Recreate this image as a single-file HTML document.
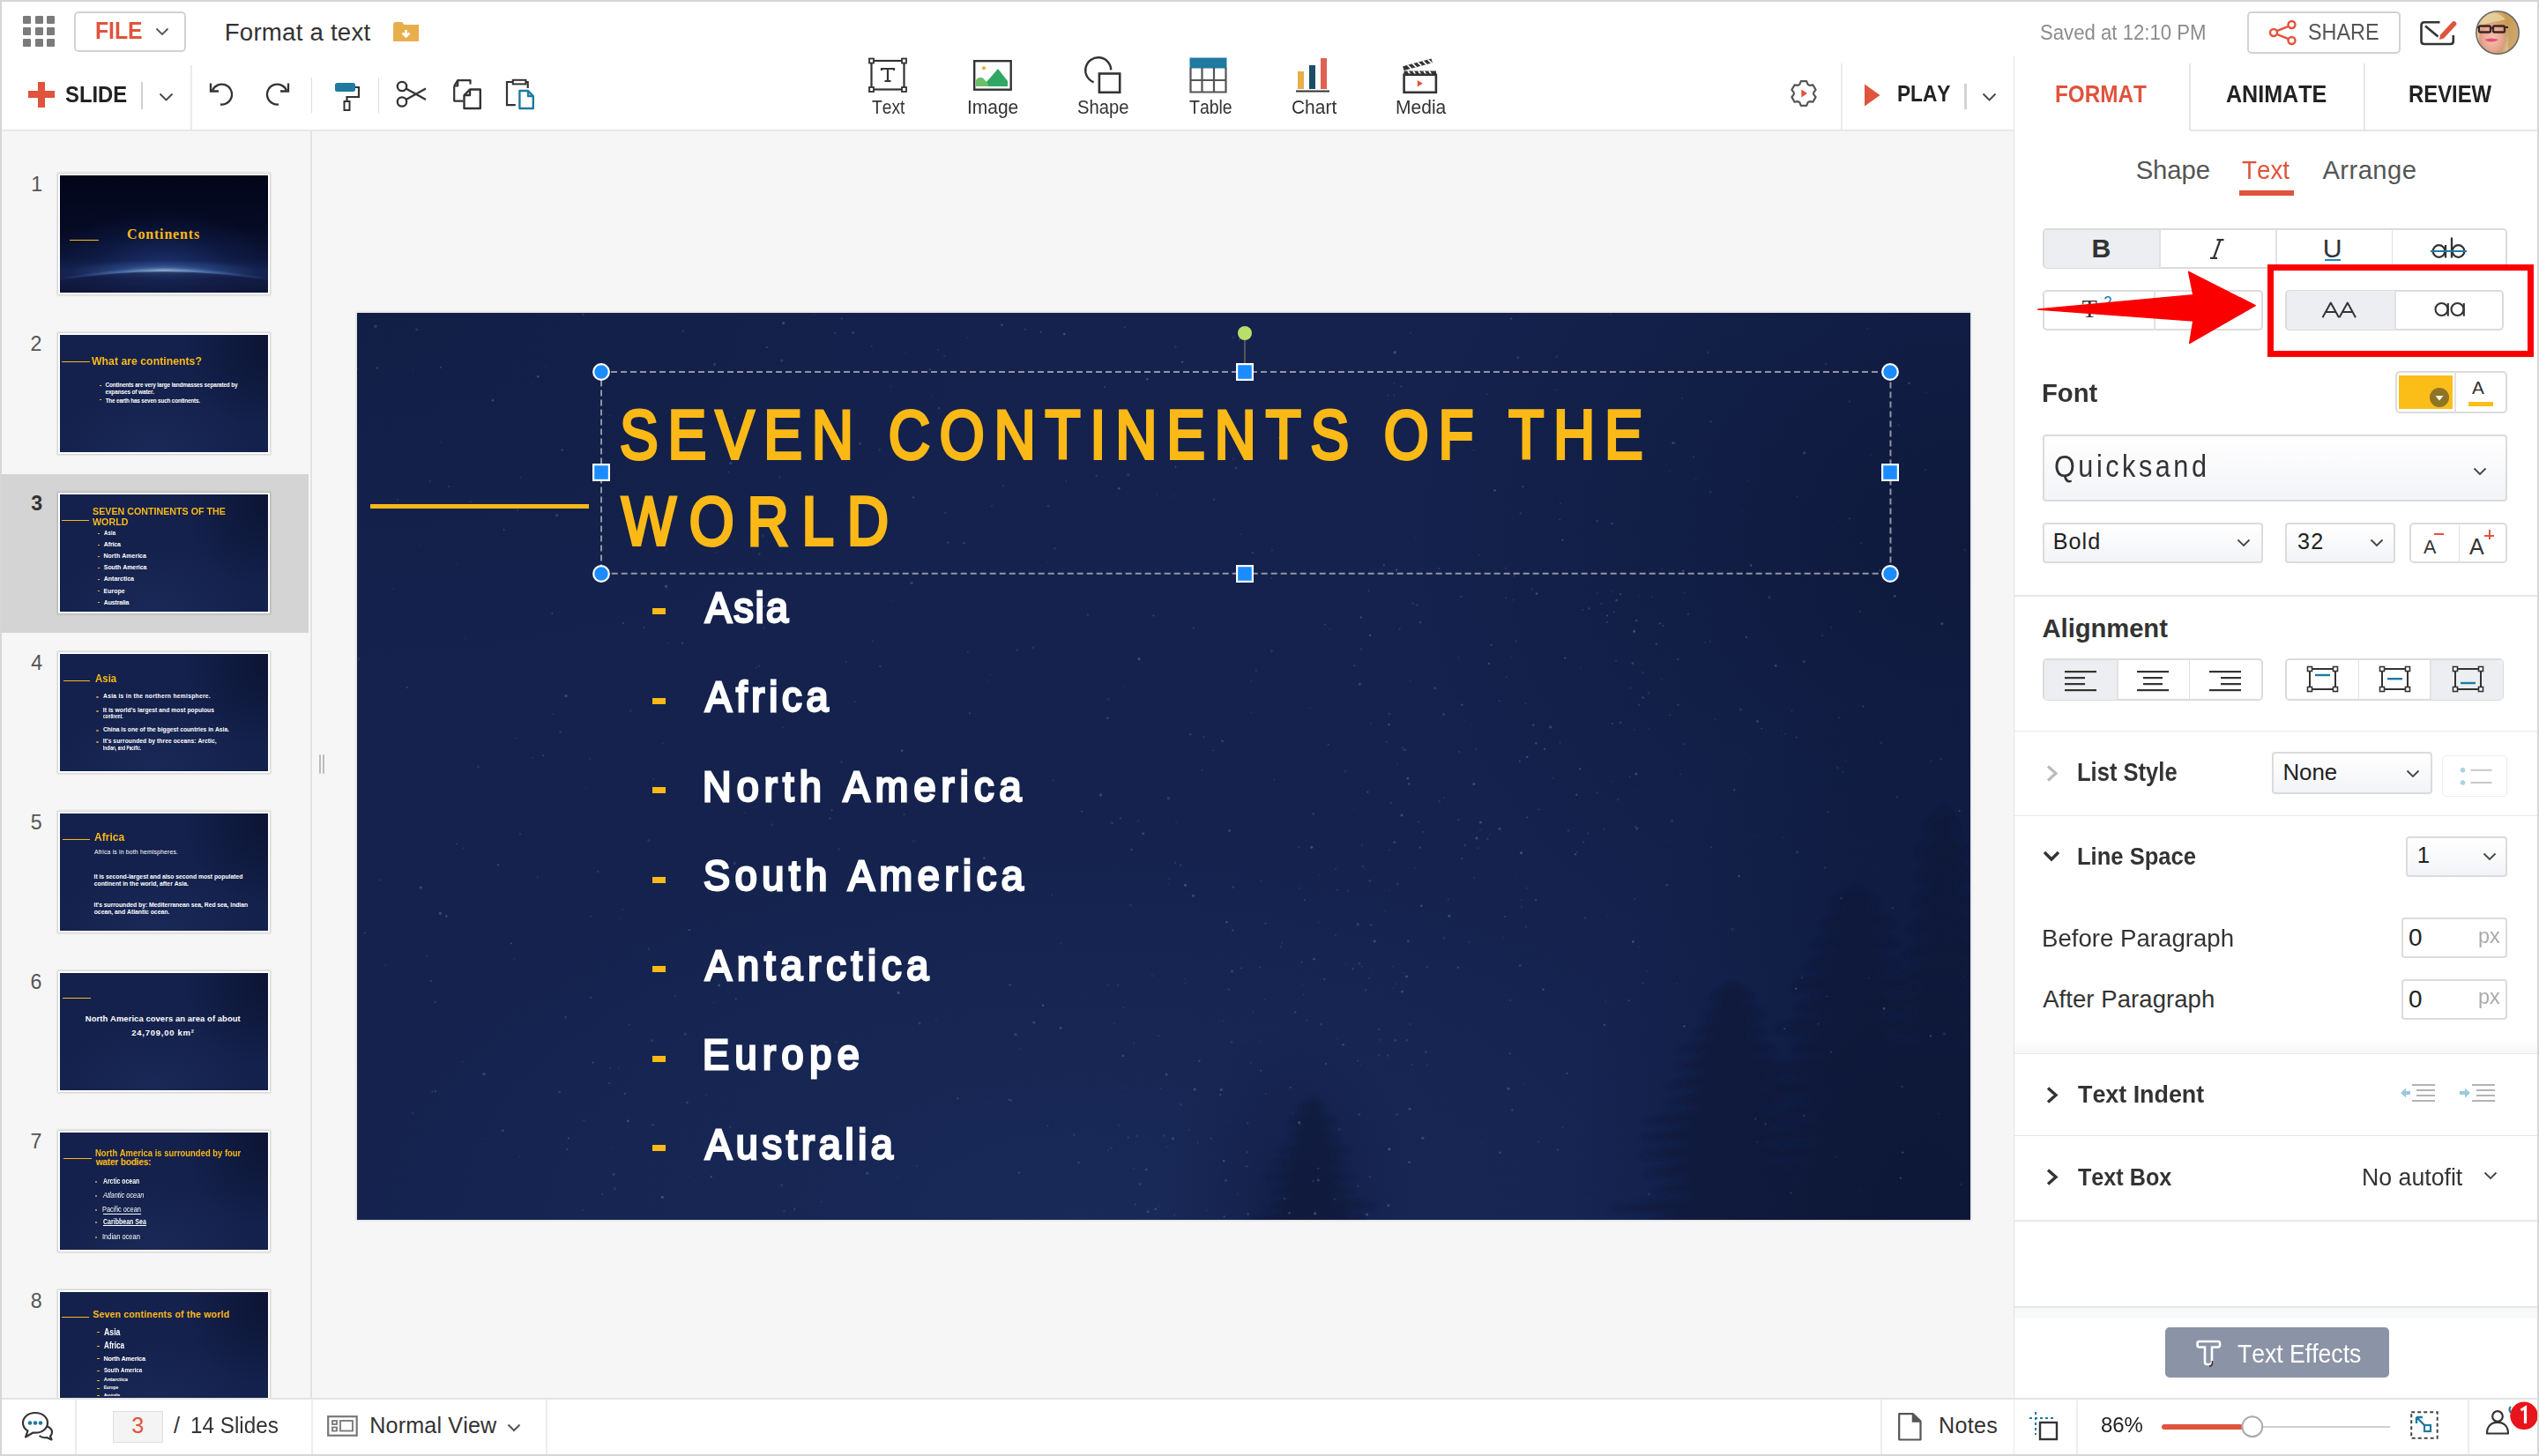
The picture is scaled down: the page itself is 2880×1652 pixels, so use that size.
<!DOCTYPE html>
<html><head><meta charset="utf-8">
<style>
*{margin:0;padding:0;box-sizing:border-box}
html,body{width:2880px;height:1652px;overflow:hidden;background:#fff}
body{position:relative;font-family:"Liberation Sans",sans-serif;color:#333;font-kerning:none}
.a{position:absolute}
.t{position:absolute;white-space:nowrap;line-height:1}
svg{position:absolute;overflow:visible}
</style></head><body>
<div class="a" style="left:0px;top:149px;width:2880px;height:1438px;background:#f6f6f6"></div>
<div class="a" style="left:0px;top:147px;width:2284px;height:2px;background:#e8e8e8"></div>
<div class="a" style="left:352px;top:149px;width:1.5px;height:1438px;background:#e2e2e2"></div>
<div class="a" style="left:2284px;top:64px;width:594px;height:1523px;background:#fff;border-left:1.5px solid #e2e2e2"></div>
<div class="a" style="left:26px;top:18px;width:9px;height:9px;background:#7b7b7b;border-radius:1px"></div>
<div class="a" style="left:39.5px;top:18px;width:9px;height:9px;background:#7b7b7b;border-radius:1px"></div>
<div class="a" style="left:53px;top:18px;width:9px;height:9px;background:#7b7b7b;border-radius:1px"></div>
<div class="a" style="left:26px;top:31px;width:9px;height:9px;background:#7b7b7b;border-radius:1px"></div>
<div class="a" style="left:39.5px;top:31px;width:9px;height:9px;background:#7b7b7b;border-radius:1px"></div>
<div class="a" style="left:53px;top:31px;width:9px;height:9px;background:#7b7b7b;border-radius:1px"></div>
<div class="a" style="left:26px;top:43.5px;width:9px;height:9px;background:#7b7b7b;border-radius:1px"></div>
<div class="a" style="left:39.5px;top:43.5px;width:9px;height:9px;background:#7b7b7b;border-radius:1px"></div>
<div class="a" style="left:53px;top:43.5px;width:9px;height:9px;background:#7b7b7b;border-radius:1px"></div>
<div class="a" style="left:84px;top:13px;width:127px;height:46px;border:2px solid #d2d2d2;border-radius:5px;background:#fff"></div>
<div class="t" style="left:107.54px;top:21.73px;font-size:26.89px;color:#e0533c;font-weight:700;transform:scaleX(0.9205);transform-origin:0 0;">FILE</div>
<svg style="left:176px;top:30px;" width="16" height="12" viewBox="0 0 16 12"><path d="M1.5 2.5 L8 9 L14.5 2.5" fill="none" stroke="#555" stroke-width="1.8"/></svg>
<div class="t" style="left:254.73px;top:22.62px;font-size:27.62px;color:#333;letter-spacing:0.233px;">Format a text</div>
<svg style="left:446px;top:25px;" width="29" height="22" viewBox="0 0 29 22"><path d="M0 3 Q0 0 3 0 L10 0 L12.5 3 L29 3 L29 7 L0 7 Z" fill="#e8ae4c"/><rect x="0" y="6" width="29" height="16" fill="#e8ae4c"/><path d="M14.5 9 V16 M10.5 12.5 L14.5 16.5 L18.5 12.5" stroke="#fff" stroke-width="2.6" fill="none"/></svg>
<div class="t" style="left:2313.59px;top:26.06px;font-size:23.55px;color:#8c8c8c;transform:scaleX(0.9413);transform-origin:0 0;">Saved at 12:10 PM</div>
<div class="a" style="left:2549px;top:13px;width:174px;height:48px;border:2px solid #d2d2d2;border-radius:5px;background:#fff"></div>
<svg style="left:2574px;top:23px;" width="32" height="28" viewBox="0 0 32 28"><circle cx="5" cy="14" r="4" fill="none" stroke="#e0533c" stroke-width="2.4"/><circle cx="25.5" cy="5" r="4" fill="none" stroke="#e0533c" stroke-width="2.4"/><circle cx="25.5" cy="23" r="4" fill="none" stroke="#e0533c" stroke-width="2.4"/><path d="M8.6 12.2 L21.8 6.8 M8.6 15.8 L21.8 21.2" stroke="#e0533c" stroke-width="2.4"/></svg>
<div class="t" style="left:2618.34px;top:24.29px;font-size:25.87px;color:#555;transform:scaleX(0.9050);transform-origin:0 0;">SHARE</div>
<svg style="left:2745px;top:22px;" width="44" height="30" viewBox="0 0 44 30"><path d="M22.5 3.2 H5 Q1.5 3.2 1.5 6.7 V24.7 Q1.5 28 5 28 H34.5 Q37.8 28 37.8 24.7 V18" fill="none" stroke="#333" stroke-width="2.6" stroke-linejoin="round"/><path d="M6 7.5 L20.5 19.5" stroke="#333" stroke-width="2.6"/><path d="M23 17.5 L36.5 3 Q38.5 1 40.5 3 Q42.5 5 40.5 7 L27 21.5 L22 23 Z" fill="#e0533c"/></svg>
<svg style="left:2808px;top:12px;" width="50" height="50" viewBox="0 0 50 50"><defs><clipPath id="avc"><circle cx="25" cy="25" r="24.2"/></clipPath><linearGradient id="hair" x1="0" y1="0" x2="1" y2="0.3"><stop offset="0" stop-color="#e8d7b0"/><stop offset=".45" stop-color="#d9b070"/><stop offset=".75" stop-color="#c79a55"/><stop offset="1" stop-color="#e2d8c0"/></linearGradient><radialGradient id="face" cx=".5" cy=".5" r=".5"><stop offset="0" stop-color="#f4c2b0"/><stop offset=".7" stop-color="#e9a892"/><stop offset="1" stop-color="#d89a80"/></radialGradient></defs>
<g clip-path="url(#avc)"><rect width="50" height="50" fill="url(#hair)"/>
<ellipse cx="19" cy="31" rx="15" ry="19" fill="url(#face)"/>
<path d="M30 0 Q40 20 36 50 L50 50 L50 0 Z" fill="#c99b58" opacity=".8"/>
<path d="M4 4 Q20 -4 34 10 Q24 12 8 16 Z" fill="#e6cf9a" opacity=".9"/>
<rect x="4" y="17.5" width="13" height="7" rx="1.5" fill="none" stroke="#3a2626" stroke-width="2.3"/>
<rect x="20" y="17.5" width="13" height="7" rx="1.5" fill="none" stroke="#3a2626" stroke-width="2.3"/>
<path d="M17 20 H20 M1 19 H4 M33 19 H37" stroke="#3a2626" stroke-width="2"/>
<path d="M10 33 Q18 30 26 33 Q18 38 10 33 Z" fill="#e2507a"/>
</g><circle cx="25" cy="25" r="24.2" fill="none" stroke="#666" stroke-width="1.5"/></svg>
<div class="a" style="left:32px;top:103px;width:30px;height:7.5px;background:#e0533c"></div>
<div class="a" style="left:43.2px;top:92.5px;width:7.5px;height:29px;background:#e0533c"></div>
<div class="t" style="left:73.71px;top:93.67px;font-size:26.02px;color:#222;font-weight:700;transform:scaleX(0.9165);transform-origin:0 0;">SLIDE</div>
<div class="a" style="left:160px;top:93px;width:1.5px;height:31px;background:#d0d0d0"></div>
<svg style="left:180px;top:104px;" width="17" height="12" viewBox="0 0 17 12"><path d="M1.5 2.5 L8.5 9.5 L15.5 2.5" fill="none" stroke="#444" stroke-width="1.8"/></svg>
<div class="a" style="left:216px;top:74px;width:1.5px;height:74px;background:#ebebeb"></div>
<svg style="left:237px;top:93px;" width="29" height="28" viewBox="0 0 29 28"><path d="M4 9.5 A11.5 11.5 0 1 1 13 25.5" fill="none" stroke="#333" stroke-width="2.3"/><path d="M2 1.5 V10.5 H11" fill="none" stroke="#333" stroke-width="2.3"/></svg>
<svg style="left:300px;top:93px;" width="29" height="28" viewBox="0 0 29 28"><path d="M25 9.5 A11.5 11.5 0 1 0 16 25.5" fill="none" stroke="#333" stroke-width="2.3"/><path d="M27 1.5 V10.5 H18" fill="none" stroke="#333" stroke-width="2.3"/></svg>
<div class="a" style="left:352.5px;top:88px;width:1.5px;height:40px;background:#dcdcdc"></div>
<svg style="left:379px;top:93px;" width="30" height="33" viewBox="0 0 30 33"><rect x="1" y="1" width="23" height="10" rx="2.5" fill="#1f7aa0"/><path d="M24 6 H28 V17 H14.5 V22" fill="none" stroke="#333" stroke-width="2.2"/><rect x="11.5" y="22" width="6" height="10" fill="none" stroke="#333" stroke-width="2"/></svg>
<div class="a" style="left:428.5px;top:88px;width:1.5px;height:40px;background:#dcdcdc"></div>
<svg style="left:449px;top:91px;" width="36" height="32" viewBox="0 0 36 32"><circle cx="7" cy="7" r="5.2" fill="none" stroke="#333" stroke-width="2.3"/><circle cx="7" cy="24.5" r="5.2" fill="none" stroke="#333" stroke-width="2.3"/><path d="M11.5 9.5 L34 22 M11.5 22 L34 9.5" stroke="#333" stroke-width="2.3"/></svg>
<svg style="left:514px;top:90px;" width="34" height="35" viewBox="0 0 34 35"><path d="M1.2 7.5 L5.2 1.2 H19.5 V5.5 M1.2 7.5 V24.6 H11.5 M1.2 7.5 H5.2 V1.2" fill="none" stroke="#333" stroke-width="2.2" stroke-linejoin="round"/><path d="M12.5 18 L19 11.5 H30.8 V33 H12.5 Z M12.5 18 H19 V11.5" fill="none" stroke="#333" stroke-width="2.4" stroke-linejoin="round"/></svg>
<svg style="left:573px;top:89px;" width="34" height="36" viewBox="0 0 34 36"><path d="M8.5 4 H2 V30.2 H11.8 M23.5 4 H25.7 V11" fill="none" stroke="#333" stroke-width="2.2"/><rect x="8.8" y="1.8" width="14.6" height="4.6" fill="none" stroke="#333" stroke-width="2"/><path d="M16.4 14 H26 L31.8 20 V34 H16.4 Z M26 14 V20 H31.8" fill="none" stroke="#1f7aa0" stroke-width="2.4" stroke-linejoin="round"/></svg>
<svg style="left:985px;top:65px;" width="44" height="40" viewBox="0 0 44 40"><rect x="3.5" y="4" width="37" height="32.5" fill="none" stroke="#333" stroke-width="2.2"/><rect x="1" y="1.5" width="5" height="5" fill="#fff" stroke="#333" stroke-width="1.8"/><rect x="38" y="1.5" width="5" height="5" fill="#fff" stroke="#333" stroke-width="1.8"/><rect x="1" y="34" width="5" height="5" fill="#fff" stroke="#333" stroke-width="1.8"/><rect x="38" y="34" width="5" height="5" fill="#fff" stroke="#333" stroke-width="1.8"/><path d="M15 15 V13 H29 V15 M22 13 V27 M18.5 27 H25.5" fill="none" stroke="#333" stroke-width="2.2"/></svg>
<div class="t" style="left:988.97px;top:112.29px;font-size:21.51px;color:#333;transform:scaleX(0.8957);transform-origin:0 0;">Text</div>
<svg style="left:1104px;top:68px;" width="44" height="35" viewBox="0 0 44 35"><rect x="1.2" y="1.2" width="41.5" height="32.5" fill="none" stroke="#333" stroke-width="2.4"/><circle cx="12" cy="9.2" r="2" fill="#f0a630"/><path d="M3 30 L3 23 Q7 18 11 21 L15 25 L28 10 L39 24 L39 30 Z" fill="#2fa864"/><path d="M3 30 L3 23 Q7 18 11 21 L17 28 L17 30 Z" fill="#6cc06a"/></svg>
<div class="t" style="left:1096.67px;top:112.29px;font-size:21.51px;color:#333;transform:scaleX(0.9746);transform-origin:0 0;">Image</div>
<svg style="left:1229px;top:63px;" width="44" height="44" viewBox="0 0 44 44"><path d="M11.6 30.3 A14.5 14.5 0 1 1 31.2 16.4" fill="none" stroke="#333" stroke-width="2.4"/><rect x="17.9" y="20.5" width="23.3" height="21.3" fill="none" stroke="#333" stroke-width="2.6"/></svg>
<div class="t" style="left:1222.48px;top:112.29px;font-size:21.51px;color:#333;transform:scaleX(0.9391);transform-origin:0 0;">Shape</div>
<svg style="left:1349px;top:65px;" width="43" height="41" viewBox="0 0 43 41"><rect x="0.5" y="0.5" width="42" height="12" fill="#1f7aa0"/><path d="M1.5 12 V39.5 H41.5 V12 M1.5 26 H41.5 M14.5 12 V39.5 M28 12 V39.5" fill="none" stroke="#555" stroke-width="2.2"/></svg>
<div class="t" style="left:1348.56px;top:112.29px;font-size:21.51px;color:#333;transform:scaleX(0.9051);transform-origin:0 0;">Table</div>
<svg style="left:1470px;top:65px;" width="39" height="41" viewBox="0 0 39 41"><rect x="2" y="16" width="7" height="20" fill="#e8ae4c"/><rect x="15" y="9" width="7" height="27" fill="#1b4e66"/><rect x="28" y="1" width="7" height="35" fill="#e06054"/><path d="M0 38.5 H38" stroke="#333" stroke-width="2"/></svg>
<div class="t" style="left:1464.94px;top:112.29px;font-size:21.51px;color:#333;transform:scaleX(0.9737);transform-origin:0 0;">Chart</div>
<svg style="left:1591px;top:64px;" width="40" height="44" viewBox="0 0 40 44"><g transform="rotate(-15 1.5 16)"><rect x="1.5" y="11" width="33.5" height="5" fill="#333"/><path d="M7 11 l3 5 M13 11 l3 5 M19 11 l3 5 M25 11 l3 5 M31 11 l3 5" stroke="#fff" stroke-width="1.7"/></g><rect x="1.5" y="16.5" width="36.5" height="4.5" fill="#333"/><path d="M6 16.5 l3 4.5 M12 16.5 l3 4.5 M18 16.5 l3 4.5 M24 16.5 l3 4.5 M30 16.5 l3 4.5" stroke="#fff" stroke-width="1.7"/><rect x="1.6" y="20.8" width="36.3" height="20" fill="none" stroke="#333" stroke-width="2.6"/><path d="M16.8 27 V34.4 L22.8 30.7 Z" fill="#e0533c"/></svg>
<div class="t" style="left:1583.47px;top:112.29px;font-size:21.51px;color:#333;transform:scaleX(0.9784);transform-origin:0 0;">Media</div>
<svg style="left:2030px;top:90px;" width="32" height="32" viewBox="0 0 32 32"><path d="M11.40 5.68 L12.81 2.16 L19.19 2.16 L20.60 5.68 L22.64 6.86 L26.39 6.32 L29.58 11.85 L27.24 14.82 L27.24 17.18 L29.58 20.15 L26.39 25.68 L22.64 25.14 L20.60 26.32 L19.19 29.84 L12.81 29.84 L11.40 26.32 L9.36 25.14 L5.61 25.68 L2.42 20.15 L4.76 17.18 L4.76 14.82 L2.42 11.85 L5.61 6.32 L9.36 6.86 Z" fill="none" stroke="#555" stroke-width="2.2" stroke-linejoin="round"/><path d="M13.3 11.5 V20.5 L20 16 Z" fill="#e0533c"/></svg>
<div class="a" style="left:2088px;top:72px;width:1.5px;height:76px;background:#ebebeb"></div>
<svg style="left:2114px;top:95px;" width="20" height="26" viewBox="0 0 20 26"><path d="M1 0.5 V25.5 L18.5 13 Z" fill="#e0533c"/></svg>
<div class="t" style="left:2151.78px;top:93.72px;font-size:25.73px;color:#222;font-weight:700;transform:scaleX(0.8815);transform-origin:0 0;">PLAY</div>
<div class="a" style="left:2228.3px;top:94.7px;width:3.2px;height:29px;background:#d3d3d3"></div>
<svg style="left:2248px;top:104px;" width="17" height="12" viewBox="0 0 17 12"><path d="M1.5 2.5 L8.5 9.5 L15.5 2.5" fill="none" stroke="#444" stroke-width="1.8"/></svg>
<div class="a" style="left:2483px;top:72px;width:1.5px;height:76px;background:#e6e6e6"></div>
<div class="a" style="left:2681px;top:72px;width:1.5px;height:76px;background:#e6e6e6"></div>
<div class="a" style="left:2484px;top:147px;width:394px;height:2px;background:#e6e6e6"></div>
<div class="t" style="left:2331.38px;top:93.53px;font-size:26.89px;color:#e0533c;font-weight:700;transform:scaleX(0.9033);transform-origin:0 0;">FORMAT</div>
<div class="t" style="left:2524.68px;top:93.53px;font-size:26.89px;color:#222;font-weight:700;transform:scaleX(0.9332);transform-origin:0 0;">ANIMATE</div>
<div class="t" style="left:2731.90px;top:93.53px;font-size:26.89px;color:#222;font-weight:700;transform:scaleX(0.8873);transform-origin:0 0;">REVIEW</div>
<div class="t" style="left:2422.67px;top:179.06px;font-size:29.22px;color:#555;letter-spacing:-0.038px;">Shape</div>
<div class="t" style="left:2542.88px;top:179.06px;font-size:29.22px;color:#e0533c;transform:scaleX(0.9509);transform-origin:0 0;">Text</div>
<div class="t" style="left:2634.44px;top:179.06px;font-size:29.22px;color:#555;letter-spacing:0.420px;">Arrange</div>
<div class="a" style="left:2540px;top:216px;width:62px;height:5.5px;background:#e0533c"></div>
<div class="a" style="left:2317px;top:259px;width:527px;height:46px;border:2px solid #dbdbdb;border-radius:5px;background:#fff;overflow:hidden"></div>
<div class="a" style="left:2318.5px;top:260.5px;width:131px;height:43px;background:#eceef1;border-radius:4px 0 0 4px"></div>
<div class="a" style="left:2449px;top:260px;width:1.5px;height:44px;background:#e2e2e2"></div>
<div class="a" style="left:2581px;top:260px;width:1.5px;height:44px;background:#e2e2e2"></div>
<div class="a" style="left:2712.5px;top:260px;width:1.5px;height:44px;background:#e2e2e2"></div>
<div class="t" style="left:2372.58px;top:266.90px;font-size:30.23px;color:#333;font-weight:700;">B</div>
<svg style="left:2505px;top:271px;" width="18" height="23" viewBox="0 0 18 23"><path d="M9.5 1.2 H17.5 M2 21.8 H10 M13.5 1.2 L6 21.8" fill="none" stroke="#333" stroke-width="2.3"/></svg>
<div class="t" style="left:2634.67px;top:266.90px;font-size:30.23px;color:#333;">U</div>
<div class="a" style="left:2637px;top:293.5px;width:18px;height:2.5px;background:#1a8ac0"></div>
<svg style="left:2757px;top:268px;" width="42" height="26" viewBox="0 0 42 26"><circle cx="9.5" cy="17" r="6.8" fill="none" stroke="#333" stroke-width="2.3"/><path d="M17 10 V24.5" stroke="#333" stroke-width="2.3"/><path d="M24 1.5 V24.5" stroke="#333" stroke-width="2.3"/><circle cx="31.5" cy="17" r="6.8" fill="none" stroke="#333" stroke-width="2.3"/></svg>
<div class="a" style="left:2757px;top:283.5px;width:41px;height:2.5px;background:#1a7aa8"></div>
<div class="a" style="left:2317px;top:328.5px;width:250px;height:46.5px;border:2px solid #dbdbdb;border-radius:5px;background:#fff"></div>
<div class="a" style="left:2443px;top:329.5px;width:1.5px;height:45px;background:#e2e2e2"></div>
<div class="t" style="left:2361.49px;top:336.88px;font-size:28.49px;color:#333;font-family:'Liberation Serif',serif;">T</div>
<div class="t" style="left:2385.92px;top:335.23px;font-size:17.44px;color:#1a7aa8;">2</div>
<div class="t" style="left:2487.49px;top:336.88px;font-size:28.49px;color:#333;font-family:'Liberation Serif',serif;">T</div>
<div class="t" style="left:2511.12px;top:353.23px;font-size:17.44px;color:#1a7aa8;">2</div>
<div class="a" style="left:2592.4px;top:328.5px;width:248px;height:46.5px;border:2px solid #dbdbdb;border-radius:5px;background:#fff;overflow:hidden"></div>
<div class="a" style="left:2594px;top:330px;width:122px;height:43.5px;background:#eceef1;border-radius:4px 0 0 4px"></div>
<div class="a" style="left:2716px;top:329.5px;width:1.5px;height:45px;background:#e2e2e2"></div>
<svg style="left:2633px;top:342px;" width="44" height="20" viewBox="0 0 44 20"><path d="M1.5 18.3 L10.8 1.5 L20 18.3 M5.3 12 H16.3" fill="none" stroke="#333" stroke-width="2" stroke-linejoin="round"/><path d="M20.5 18.3 L29.8 1.5 L39 18.3 M24.3 12 H35.3" fill="none" stroke="#333" stroke-width="2" stroke-linejoin="round"/></svg>
<svg style="left:2760px;top:341px;" width="40" height="20" viewBox="0 0 40 20"><circle cx="9.5" cy="10" r="7" fill="none" stroke="#333" stroke-width="2.1"/><path d="M16.8 3 V17.7" stroke="#333" stroke-width="2.1"/><circle cx="27.5" cy="10" r="7" fill="none" stroke="#333" stroke-width="2.1"/><path d="M34.8 3 V17.7" stroke="#333" stroke-width="2.1"/></svg>
<svg style="left:2300px;top:300px;" width="270" height="100" viewBox="0 0 270 100"><path d="M11.8 50.9 L187.9 34.7 L182.6 8.3 L258.2 46.7 L183.7 89.3 L187.9 63.9 Z" fill="#fb0000" stroke="#fb0000" stroke-width="1.5" stroke-linejoin="round"/></svg>
<div class="a" style="left:2572px;top:300.4px;width:301.6px;height:105px;border:7.6px solid #fb0000"></div>
<div class="t" style="left:2315.84px;top:430.77px;font-size:29.80px;color:#333;font-weight:700;transform:scaleX(0.9812);transform-origin:0 0;">Font</div>
<div class="a" style="left:2716.7px;top:420.8px;width:127px;height:48.4px;border:2px solid #dbdbdb;border-radius:5px;background:#fff"></div>
<div class="a" style="left:2720.5px;top:426px;width:61.5px;height:37.8px;background:#fbbd18"></div>
<div class="a" style="left:2784px;top:422px;width:1.5px;height:46px;background:#e2e2e2"></div>
<svg style="left:2755.8px;top:439.8px;" width="22" height="22" viewBox="0 0 22 22"><circle cx="11" cy="11" r="11" fill="#8e7425"/><path d="M6.5 9 H15.5 L11 14.5 Z" fill="#fff"/></svg>
<div class="t" style="left:2803.96px;top:429.70px;font-size:20.78px;color:#333;">A</div>
<div class="a" style="left:2800px;top:455.5px;width:28px;height:5px;background:#fbbd18"></div>
<div class="a" style="left:2317px;top:492.9px;width:526.6px;height:76.1px;border:2px solid #dbdbdb;border-radius:4px;background:linear-gradient(#fff,#f3f4f7);"></div>
<div class="t" style="left:2330.05px;top:512.35px;font-size:35.61px;color:#333;letter-spacing:4.104px;transform:scaleX(0.8600);transform-origin:0 0;">Quicksand</div>
<svg style="left:2805px;top:529px;" width="18" height="14" viewBox="0 0 18 14"><path d="M1.5 2.5 L8 9 L14.5 2.5" fill="none" stroke="#444" stroke-width="1.8"/></svg>
<div class="a" style="left:2317px;top:592.6px;width:250px;height:46.4px;border:2px solid #dbdbdb;border-radius:4px;background:linear-gradient(#fff,#f3f4f7);"></div>
<div class="t" style="left:2328.74px;top:602.01px;font-size:25.15px;color:#222;letter-spacing:1.019px;">Bold</div>
<svg style="left:2537px;top:609.5px;" width="18" height="14" viewBox="0 0 18 14"><path d="M1.5 2.5 L8 9 L14.5 2.5" fill="none" stroke="#444" stroke-width="1.8"/></svg>
<div class="a" style="left:2592.4px;top:592.6px;width:124.6px;height:46.4px;border:2px solid #dbdbdb;border-radius:4px;background:linear-gradient(#fff,#f3f4f7);"></div>
<div class="t" style="left:2606.04px;top:602.01px;font-size:25.15px;color:#222;letter-spacing:1.253px;">32</div>
<svg style="left:2687.5px;top:609.5px;" width="18" height="14" viewBox="0 0 18 14"><path d="M1.5 2.5 L8 9 L14.5 2.5" fill="none" stroke="#444" stroke-width="1.8"/></svg>
<div class="a" style="left:2732.5px;top:592.6px;width:111.1px;height:46.4px;border:2px solid #dbdbdb;border-radius:5px;background:#fff"></div>
<div class="a" style="left:2788.5px;top:594px;width:1.5px;height:44px;background:#e2e2e2"></div>
<div class="t" style="left:2748.96px;top:610.59px;font-size:21.51px;color:#333;">A</div>
<div class="a" style="left:2761px;top:604.5px;width:10.7px;height:2.5px;background:#e0533c"></div>
<div class="t" style="left:2800.95px;top:607.63px;font-size:25.00px;color:#333;">A</div>
<div class="a" style="left:2818.2px;top:606.8px;width:11px;height:2.5px;background:#e0533c"></div>
<div class="a" style="left:2822.5px;top:601.3px;width:2.5px;height:11px;background:#e0533c"></div>
<div class="a" style="left:2285px;top:675px;width:593px;height:1.5px;background:#e8e8e8"></div>
<div class="t" style="left:2316.57px;top:698.96px;font-size:29.22px;color:#333;font-weight:700;letter-spacing:-0.067px;">Alignment</div>
<div class="a" style="left:2317px;top:747px;width:250px;height:48px;border:2px solid #dbdbdb;border-radius:5px;background:#fff;overflow:hidden"></div>
<div class="a" style="left:2318.5px;top:748.5px;width:83px;height:45px;background:#eceef1"></div>
<div class="a" style="left:2401px;top:748px;width:1.5px;height:46px;background:#e2e2e2"></div>
<div class="a" style="left:2482.8px;top:748px;width:1.5px;height:46px;background:#e2e2e2"></div>
<svg style="left:2342px;top:760.5px;" width="40" height="24" viewBox="0 0 40 24"><rect x="0" y="0" width="36" height="2.2" fill="#333"/><rect x="0" y="7" width="23" height="2.2" fill="#333"/><rect x="0" y="14" width="23" height="2.2" fill="#333"/><rect x="0" y="21" width="36" height="2.2" fill="#333"/></svg>
<svg style="left:2424px;top:760.5px;" width="40" height="24" viewBox="0 0 40 24"><rect x="0" y="0" width="36" height="2.2" fill="#333"/><rect x="7" y="7" width="22" height="2.2" fill="#333"/><rect x="7" y="14" width="22" height="2.2" fill="#333"/><rect x="0" y="21" width="36" height="2.2" fill="#333"/></svg>
<svg style="left:2505.8px;top:760.5px;" width="40" height="24" viewBox="0 0 40 24"><rect x="0" y="0" width="36" height="2.2" fill="#333"/><rect x="13" y="7" width="23" height="2.2" fill="#333"/><rect x="13" y="14" width="23" height="2.2" fill="#333"/><rect x="0" y="21" width="36" height="2.2" fill="#333"/></svg>
<div class="a" style="left:2592.4px;top:747px;width:248px;height:48px;border:2px solid #dbdbdb;border-radius:5px;background:#fff;overflow:hidden"></div>
<div class="a" style="left:2757px;top:748.5px;width:82px;height:45px;background:#eceef1"></div>
<div class="a" style="left:2674.6px;top:748px;width:1.5px;height:46px;background:#e2e2e2"></div>
<div class="a" style="left:2756px;top:748px;width:1.5px;height:46px;background:#e2e2e2"></div>
<svg style="left:2616.8px;top:756px;" width="36" height="30" viewBox="0 0 36 30"><rect x="3" y="3" width="29" height="23" fill="none" stroke="#333" stroke-width="2"/><rect x="0.5" y="0.5" width="5" height="5" fill="#fff" stroke="#333" stroke-width="1.6"/><rect x="29.5" y="0.5" width="5" height="5" fill="#fff" stroke="#333" stroke-width="1.6"/><rect x="0.5" y="23.5" width="5" height="5" fill="#fff" stroke="#333" stroke-width="1.6"/><rect x="29.5" y="23.5" width="5" height="5" fill="#fff" stroke="#333" stroke-width="1.6"/><rect x="9" y="8.8" width="17" height="2.4" fill="#1a7aa8"/></svg>
<svg style="left:2699px;top:756px;" width="36" height="30" viewBox="0 0 36 30"><rect x="3" y="3" width="29" height="23" fill="none" stroke="#333" stroke-width="2"/><rect x="0.5" y="0.5" width="5" height="5" fill="#fff" stroke="#333" stroke-width="1.6"/><rect x="29.5" y="0.5" width="5" height="5" fill="#fff" stroke="#333" stroke-width="1.6"/><rect x="0.5" y="23.5" width="5" height="5" fill="#fff" stroke="#333" stroke-width="1.6"/><rect x="29.5" y="23.5" width="5" height="5" fill="#fff" stroke="#333" stroke-width="1.6"/><rect x="9" y="13" width="17" height="2.4" fill="#1a7aa8"/></svg>
<svg style="left:2782.4px;top:756px;" width="36" height="30" viewBox="0 0 36 30"><rect x="3" y="3" width="29" height="23" fill="none" stroke="#333" stroke-width="2"/><rect x="0.5" y="0.5" width="5" height="5" fill="#fff" stroke="#333" stroke-width="1.6"/><rect x="29.5" y="0.5" width="5" height="5" fill="#fff" stroke="#333" stroke-width="1.6"/><rect x="0.5" y="23.5" width="5" height="5" fill="#fff" stroke="#333" stroke-width="1.6"/><rect x="29.5" y="23.5" width="5" height="5" fill="#fff" stroke="#333" stroke-width="1.6"/><rect x="9" y="17.8" width="17" height="2.4" fill="#1a7aa8"/></svg>
<div class="a" style="left:2285px;top:828.5px;width:593px;height:1.5px;background:#e8e8e8"></div>
<svg style="left:2320px;top:867px;" width="16" height="22" viewBox="0 0 16 22"><path d="M3 2.5 L12 10.5 L3 18.5" fill="none" stroke="#bbb" stroke-width="3.2"/></svg>
<div class="t" style="left:2356.29px;top:862.06px;font-size:29.22px;color:#333;font-weight:700;transform:scaleX(0.8745);transform-origin:0 0;">List Style</div>
<div class="a" style="left:2576.6px;top:853px;width:182.4px;height:48.4px;border:2px solid #dbdbdb;border-radius:4px;background:linear-gradient(#fff,#f3f4f7);"></div>
<div class="t" style="left:2589.48px;top:864.49px;font-size:25.87px;color:#222;letter-spacing:-0.060px;">None</div>
<svg style="left:2729px;top:871.5px;" width="18" height="14" viewBox="0 0 18 14"><path d="M1.5 2.5 L8 9 L14.5 2.5" fill="none" stroke="#444" stroke-width="1.8"/></svg>
<div class="a" style="left:2770px;top:856.8px;width:73.6px;height:47.7px;border:1.5px solid #ececec;border-radius:4px;background:#fff"></div>
<svg style="left:2790px;top:870px;" width="40" height="22" viewBox="0 0 40 22"><circle cx="3.5" cy="3.8" r="2.8" fill="#a9d3e4"/><circle cx="3.5" cy="18" r="2.8" fill="#a9d3e4"/><rect x="12.5" y="2.8" width="24" height="2" fill="#c8c8c8"/><rect x="12.5" y="17" width="24" height="2" fill="#c8c8c8"/></svg>
<div class="a" style="left:2285px;top:924.5px;width:593px;height:1.5px;background:#e8e8e8"></div>
<svg style="left:2316px;top:964px;" width="24" height="16" viewBox="0 0 24 16"><path d="M3 3 L11 11 L19 3" fill="none" stroke="#333" stroke-width="3.4"/></svg>
<div class="t" style="left:2356.29px;top:958.49px;font-size:27.76px;color:#333;font-weight:700;transform:scaleX(0.9209);transform-origin:0 0;">Line Space</div>
<div class="a" style="left:2728.5px;top:949px;width:115.1px;height:45.8px;border:2px solid #dbdbdb;border-radius:4px;background:linear-gradient(#fff,#f3f4f7);"></div>
<div class="t" style="left:2741.84px;top:958.42px;font-size:25.73px;color:#222;">1</div>
<svg style="left:2815.5px;top:966px;" width="18" height="14" viewBox="0 0 18 14"><path d="M1.5 2.5 L8 9 L14.5 2.5" fill="none" stroke="#444" stroke-width="1.8"/></svg>
<div class="t" style="left:2315.53px;top:1049.88px;font-size:28.49px;color:#333;transform:scaleX(0.9696);transform-origin:0 0;">Before Paragraph</div>
<div class="a" style="left:2724px;top:1040.6px;width:119.6px;height:46.8px;border:2px solid #dbdbdb;border-radius:4px;background:#fff"></div>
<div class="t" style="left:2731.91px;top:1050.37px;font-size:27.91px;color:#222;">0</div>
<div class="t" style="left:2810.89px;top:1049.67px;font-size:24.24px;color:#aaa;transform:scaleX(0.9672);transform-origin:0 0;">px</div>
<div class="t" style="left:2317.15px;top:1120.44px;font-size:27.47px;color:#333;letter-spacing:0.086px;">After Paragraph</div>
<div class="a" style="left:2724px;top:1110.6px;width:119.6px;height:46.4px;border:2px solid #dbdbdb;border-radius:4px;background:#fff"></div>
<div class="t" style="left:2731.91px;top:1120.07px;font-size:27.91px;color:#222;">0</div>
<div class="t" style="left:2810.89px;top:1119.47px;font-size:24.24px;color:#aaa;transform:scaleX(0.9672);transform-origin:0 0;">px</div>
<div class="a" style="left:2285px;top:1180px;width:593px;height:15px;background:linear-gradient(#fff,#f6f6f6)"></div>
<div class="a" style="left:2285px;top:1194.5px;width:593px;height:1.5px;background:#e6e6e6"></div>
<svg style="left:2320px;top:1232px;" width="16" height="22" viewBox="0 0 16 22"><path d="M3 2.5 L12 10.5 L3 18.5" fill="none" stroke="#333" stroke-width="3.4"/></svg>
<div class="t" style="left:2356.50px;top:1228.42px;font-size:27.62px;color:#333;font-weight:700;transform:scaleX(0.9724);transform-origin:0 0;">Text Indent</div>
<svg style="left:2722px;top:1229px;" width="42" height="22" viewBox="0 0 42 22"><path d="M1 11 L7 5.5 V9 H12 V13 H7 V16.5 Z" fill="#9cc9dc"/><rect x="14" y="1" width="26" height="2" fill="#b3b3b3"/><rect x="19" y="7" width="21" height="2" fill="#b3b3b3"/><rect x="19" y="13" width="21" height="2" fill="#b3b3b3"/><rect x="14" y="19" width="26" height="2" fill="#b3b3b3"/></svg>
<svg style="left:2789px;top:1229px;" width="42" height="22" viewBox="0 0 42 22"><path d="M13 11 L7 5.5 V9 H1 V13 H7 V16.5 Z" fill="#9cc9dc"/><rect x="15" y="1" width="26" height="2" fill="#b3b3b3"/><rect x="20" y="7" width="21" height="2" fill="#b3b3b3"/><rect x="20" y="13" width="21" height="2" fill="#b3b3b3"/><rect x="15" y="19" width="26" height="2" fill="#b3b3b3"/></svg>
<div class="a" style="left:2285px;top:1287.5px;width:593px;height:1.5px;background:#e8e8e8"></div>
<svg style="left:2320px;top:1325px;" width="16" height="22" viewBox="0 0 16 22"><path d="M3 2.5 L12 10.5 L3 18.5" fill="none" stroke="#333" stroke-width="3.4"/></svg>
<div class="t" style="left:2356.72px;top:1322.37px;font-size:27.91px;color:#333;font-weight:700;transform:scaleX(0.9017);transform-origin:0 0;">Text Box</div>
<div class="t" style="left:2679.41px;top:1322.37px;font-size:27.91px;color:#333;transform:scaleX(0.9568);transform-origin:0 0;">No autofit</div>
<svg style="left:2817px;top:1328px;" width="18" height="14" viewBox="0 0 18 14"><path d="M1.5 2.5 L8 9 L14.5 2.5" fill="none" stroke="#444" stroke-width="1.8"/></svg>
<div class="a" style="left:2285px;top:1384px;width:593px;height:1.5px;background:#e8e8e8"></div>
<div class="a" style="left:2285px;top:1482px;width:593px;height:1.5px;background:#e6e6e6"></div>
<div class="a" style="left:2285px;top:1483.5px;width:593px;height:12px;background:#f8f9fb"></div>
<div class="a" style="left:2456px;top:1506.3px;width:253.7px;height:57.2px;background:#8b93a6;border-radius:5px"></div>
<svg style="left:2491px;top:1520px;" width="30" height="31" viewBox="0 0 30 31"><path d="M3 2 H25 Q27 2 27 4.5 V6 Q27 8.5 25 8.5 H18 V25.5 Q18 28 15.5 28 H12.5 Q10 28 10 25.5 V8.5 H3.5 Q1.5 8.5 1.5 6 V4.5 Q1.5 2 3.5 2 Z" fill="none" stroke="#fff" stroke-width="2.6"/><path d="M18.5 24 V27 Q18 30 15 30" fill="none" stroke="#333" stroke-width="1.6"/></svg>
<div class="t" style="left:2538.00px;top:1521.02px;font-size:29.51px;color:#fff;transform:scaleX(0.9011);transform-origin:0 0;">Text Effects</div>
<div class="a" style="left:405px;top:355px;width:1830px;height:1029px;box-shadow:0 0 2px 1px rgba(0,0,0,.12);overflow:hidden;
background:
radial-gradient(ellipse 22% 60% at 97% 100%, rgba(8,14,38,.45), rgba(8,14,38,0) 100%),
radial-gradient(ellipse 8% 22% at 58% 100%, rgba(8,14,38,.3), rgba(8,14,38,0) 100%),
radial-gradient(ellipse 50% 45% at 45% 100%, rgba(34,55,110,.35), rgba(34,55,110,0) 100%),
radial-gradient(ellipse 35% 55% at 100% 25%, rgba(8,14,40,.45), rgba(8,14,40,0) 100%),
radial-gradient(ellipse 40% 40% at 0% 0%, rgba(10,18,48,.25), rgba(10,18,48,0) 100%),
#14224d">
<svg style="left:0;top:0" width="1830" height="1029"><defs><filter id="bl" x="-30%" y="-30%" width="160%" height="160%"><feGaussianBlur stdDeviation="3"/></filter></defs>

<g filter="url(#bl)" fill="#0b1636" opacity="0.55">
<path d="M1700.0 650.0 L1726.9 670.3 L1712.1 675.1 L1745.8 694.2 L1720.6 699.0 L1748.8 718.1 L1722.0 722.9 L1750.1 742.0 L1722.5 746.8 L1769.9 765.9 L1731.4 770.6 L1761.7 789.8 L1727.8 794.5 L1768.1 813.6 L1730.7 818.4 L1797.3 837.5 L1743.8 842.3 L1817.1 861.4 L1752.7 866.2 L1811.4 885.3 L1750.1 890.1 L1795.6 909.2 L1743.0 914.0 L1820.1 933.1 L1754.0 937.9 L1809.2 957.0 L1749.1 961.8 L1806.1 980.9 L1747.7 985.6 L1835.4 1004.8 L1761.0 1009.5 L1846.6 1028.6 L1766.0 1033.4 L1851.9 1052.5 L1768.4 1057.3 L1855.5 1076.4 L1770.0 1081.2 L1751.0 1085.0 L1649.0 1085.0 L1635.4 1081.2 L1556.5 1076.4 L1626.9 1057.3 L1537.7 1052.5 L1630.7 1033.4 L1545.9 1028.6 L1628.5 1009.5 L1541.0 1004.8 L1641.4 985.6 L1569.7 980.9 L1649.6 961.8 L1588.1 957.0 L1656.5 937.9 L1603.3 933.1 L1660.0 914.0 L1611.1 909.2 L1650.6 890.1 L1590.3 885.3 L1647.6 866.2 L1583.6 861.4 L1667.3 842.3 L1627.4 837.5 L1658.1 818.4 L1607.0 813.6 L1669.3 794.5 L1631.7 789.8 L1666.5 770.6 L1625.6 765.9 L1673.9 746.8 L1642.0 742.0 L1677.3 722.9 L1649.5 718.1 L1682.8 699.0 L1661.7 694.2 L1687.3 675.1 L1671.8 670.3 Z"/>
<path d="M1560.0 760.0 L1584.7 777.0 L1571.1 781.0 L1598.5 797.0 L1577.3 801.0 L1596.1 817.0 L1576.3 821.0 L1609.1 837.0 L1582.1 841.0 L1627.6 857.0 L1590.4 861.0 L1632.2 877.0 L1592.5 881.0 L1626.4 897.0 L1589.9 901.0 L1633.3 917.0 L1593.0 921.0 L1635.5 937.0 L1594.0 941.0 L1641.9 957.0 L1596.8 961.0 L1659.3 977.0 L1604.7 981.0 L1689.7 997.0 L1618.4 1001.0 L1657.8 1017.0 L1604.0 1021.0 L1687.0 1037.0 L1617.2 1041.0 L1720.3 1057.0 L1632.1 1061.0 L1676.6 1077.0 L1612.5 1081.0 L1605.0 1085.0 L1515.0 1085.0 L1499.3 1081.0 L1425.2 1077.0 L1488.9 1061.0 L1402.0 1057.0 L1512.9 1041.0 L1455.2 1037.0 L1496.5 1021.0 L1419.0 1017.0 L1519.3 1001.0 L1469.6 997.0 L1513.9 981.0 L1457.7 977.0 L1511.6 961.0 L1452.4 957.0 L1512.7 941.0 L1454.9 937.0 L1514.9 921.0 L1459.9 917.0 L1525.7 901.0 L1483.9 897.0 L1526.1 881.0 L1484.7 877.0 L1530.6 861.0 L1494.8 857.0 L1532.4 841.0 L1498.6 837.0 L1540.6 821.0 L1516.9 817.0 L1546.2 801.0 L1529.4 797.0 L1548.0 781.0 L1533.4 777.0 Z"/>
<path d="M1800.0 560.0 L1817.4 584.6 L1807.8 590.3 L1829.5 613.4 L1813.3 619.2 L1829.8 642.3 L1813.4 648.1 L1834.7 671.2 L1815.6 677.0 L1851.4 700.1 L1823.1 705.9 L1853.2 729.0 L1824.0 734.8 L1853.1 757.9 L1823.9 763.7 L1872.5 786.8 L1832.6 792.6 L1854.7 815.7 L1824.6 821.4 L1862.9 844.6 L1828.3 850.3 L1889.1 873.4 L1840.1 879.2 L1895.3 902.3 L1842.9 908.1 L1905.4 931.2 L1847.4 937.0 L1883.8 960.1 L1837.7 965.9 L1897.5 989.0 L1843.9 994.8 L1905.5 1017.9 L1847.5 1023.7 L1901.1 1046.8 L1845.5 1052.6 L1903.0 1075.7 L1846.4 1081.4 L1836.0 1085.0 L1764.0 1085.0 L1757.8 1081.4 L1706.2 1075.7 L1753.2 1052.6 L1695.9 1046.8 L1755.2 1023.7 L1700.4 1017.9 L1751.1 994.8 L1691.4 989.0 L1751.8 965.9 L1692.9 960.1 L1755.2 937.0 L1700.4 931.2 L1758.4 908.1 L1707.6 902.3 L1759.9 879.2 L1711.0 873.4 L1761.6 850.3 L1714.6 844.6 L1772.0 821.4 L1737.8 815.7 L1770.1 792.6 L1733.6 786.8 L1774.6 763.7 L1743.6 757.9 L1779.2 734.8 L1753.8 729.0 L1782.2 705.9 L1760.5 700.1 L1783.8 677.0 L1764.0 671.2 L1786.3 648.1 L1769.5 642.3 L1785.8 619.2 L1768.5 613.4 L1790.6 590.3 L1779.1 584.6 Z"/>
<path d="M1085.0 890.0 L1098.5 903.5 L1091.1 906.6 L1111.1 919.3 L1096.7 922.5 L1113.7 935.1 L1097.9 938.3 L1127.1 951.0 L1104.0 954.1 L1125.9 966.8 L1103.4 970.0 L1133.4 982.6 L1106.8 985.8 L1132.3 998.5 L1106.3 1001.6 L1157.4 1014.3 L1117.6 1017.5 L1145.6 1030.1 L1112.3 1033.3 L1161.7 1046.0 L1119.5 1049.1 L1164.6 1061.8 L1120.8 1065.0 L1156.3 1077.6 L1117.1 1080.8 L1112.0 1085.0 L1058.0 1085.0 L1045.3 1080.8 L996.7 1077.6 L1047.5 1065.0 L1001.7 1061.8 L1057.1 1049.1 L1023.0 1046.0 L1050.8 1033.3 L1009.0 1030.1 L1058.8 1017.5 L1026.8 1014.3 L1062.6 1001.6 L1035.2 998.5 L1059.6 985.8 L1028.5 982.6 L1063.4 970.0 L1037.0 966.8 L1066.6 954.1 L1044.1 951.0 L1072.2 938.3 L1056.5 935.1 L1071.9 922.5 L1055.9 919.3 L1077.1 906.6 L1067.4 903.5 Z"/>
</g>
<g><circle cx="592.6" cy="155.2" r="1.7" fill="#90a4d4" opacity="0.09"/><circle cx="1502.9" cy="96.9" r="1.4" fill="#90a4d4" opacity="0.09"/><circle cx="928.6" cy="38.6" r="1.2" fill="#90a4d4" opacity="0.18"/><circle cx="440.4" cy="567.0" r="0.8" fill="#90a4d4" opacity="0.28"/><circle cx="226.6" cy="229.7" r="1.7" fill="#90a4d4" opacity="0.22"/><circle cx="113.2" cy="602.5" r="0.8" fill="#90a4d4" opacity="0.31"/><circle cx="85.2" cy="883.4" r="1" fill="#90a4d4" opacity="0.18"/><circle cx="989.5" cy="587.5" r="1.4" fill="#90a4d4" opacity="0.28"/><circle cx="330.7" cy="598.5" r="1.7" fill="#90a4d4" opacity="0.13"/><circle cx="178.3" cy="732.8" r="1.4" fill="#90a4d4" opacity="0.09"/><circle cx="376.9" cy="700.1" r="1.2" fill="#90a4d4" opacity="0.27"/><circle cx="852.1" cy="950.2" r="1" fill="#90a4d4" opacity="0.15"/><circle cx="1453.7" cy="719.3" r="1" fill="#90a4d4" opacity="0.10"/><circle cx="549.5" cy="509.5" r="1" fill="#90a4d4" opacity="0.26"/><circle cx="526.9" cy="1008.6" r="0.8" fill="#90a4d4" opacity="0.20"/><circle cx="301.9" cy="352.0" r="1.2" fill="#90a4d4" opacity="0.18"/><circle cx="1760.5" cy="79.9" r="1.4" fill="#90a4d4" opacity="0.22"/><circle cx="1602.1" cy="322.8" r="1.7" fill="#90a4d4" opacity="0.16"/><circle cx="908.9" cy="820.0" r="0.8" fill="#90a4d4" opacity="0.28"/><circle cx="1728.8" cy="487.8" r="1.7" fill="#90a4d4" opacity="0.10"/><circle cx="1338.0" cy="318.6" r="1.4" fill="#90a4d4" opacity="0.32"/><circle cx="1504.1" cy="292.8" r="1.2" fill="#90a4d4" opacity="0.29"/><circle cx="635.0" cy="967.9" r="1" fill="#90a4d4" opacity="0.12"/><circle cx="214.3" cy="60.7" r="1" fill="#90a4d4" opacity="0.11"/><circle cx="453.1" cy="402.3" r="1.2" fill="#90a4d4" opacity="0.10"/><circle cx="822.0" cy="565.4" r="1" fill="#90a4d4" opacity="0.28"/><circle cx="1581.1" cy="286.5" r="1.2" fill="#90a4d4" opacity="0.32"/><circle cx="1249.4" cy="391.5" r="1" fill="#90a4d4" opacity="0.12"/><circle cx="322.5" cy="238.7" r="1" fill="#90a4d4" opacity="0.08"/><circle cx="1520.9" cy="187.6" r="1" fill="#90a4d4" opacity="0.08"/><circle cx="766.7" cy="380.0" r="1.4" fill="#90a4d4" opacity="0.16"/><circle cx="229.6" cy="884.1" r="1.4" fill="#90a4d4" opacity="0.24"/><circle cx="1353.8" cy="469.9" r="1.7" fill="#90a4d4" opacity="0.27"/><circle cx="718.1" cy="410.5" r="0.8" fill="#90a4d4" opacity="0.20"/><circle cx="732.8" cy="196.1" r="1" fill="#90a4d4" opacity="0.19"/><circle cx="201.2" cy="618.1" r="0.8" fill="#90a4d4" opacity="0.08"/><circle cx="276.8" cy="104.4" r="1" fill="#90a4d4" opacity="0.23"/><circle cx="128.7" cy="214.0" r="1.2" fill="#90a4d4" opacity="0.12"/><circle cx="461.6" cy="357.5" r="1" fill="#90a4d4" opacity="0.19"/><circle cx="211.1" cy="502.2" r="1.2" fill="#90a4d4" opacity="0.20"/><circle cx="570.7" cy="148.3" r="1.7" fill="#90a4d4" opacity="0.16"/><circle cx="484.5" cy="852.9" r="1" fill="#90a4d4" opacity="0.20"/><circle cx="375.5" cy="979.6" r="1" fill="#90a4d4" opacity="0.12"/><circle cx="994.0" cy="27.8" r="1.4" fill="#90a4d4" opacity="0.15"/><circle cx="1176.5" cy="93.6" r="1" fill="#90a4d4" opacity="0.20"/><circle cx="1662.1" cy="366.0" r="1" fill="#90a4d4" opacity="0.21"/><circle cx="1425.7" cy="339.2" r="1" fill="#90a4d4" opacity="0.23"/><circle cx="1442.8" cy="780.3" r="1" fill="#90a4d4" opacity="0.27"/><circle cx="1497.5" cy="761.3" r="1" fill="#90a4d4" opacity="0.13"/><circle cx="901.8" cy="752.2" r="0.8" fill="#90a4d4" opacity="0.27"/><circle cx="864.2" cy="199.3" r="1.4" fill="#90a4d4" opacity="0.31"/><circle cx="818.4" cy="964.2" r="1" fill="#90a4d4" opacity="0.31"/><circle cx="667.3" cy="226.9" r="1" fill="#90a4d4" opacity="0.19"/><circle cx="618.1" cy="496.7" r="1.4" fill="#90a4d4" opacity="0.28"/><circle cx="877.4" cy="671.9" r="1.7" fill="#90a4d4" opacity="0.10"/><circle cx="1208.9" cy="936.2" r="1.7" fill="#90a4d4" opacity="0.26"/><circle cx="874.8" cy="183.7" r="1.7" fill="#90a4d4" opacity="0.16"/><circle cx="1465.5" cy="999.8" r="1.2" fill="#90a4d4" opacity="0.19"/><circle cx="1360.3" cy="87.4" r="1" fill="#90a4d4" opacity="0.12"/><circle cx="232.5" cy="155.5" r="1.2" fill="#90a4d4" opacity="0.27"/><circle cx="267.5" cy="850.5" r="1.2" fill="#90a4d4" opacity="0.24"/><circle cx="641.2" cy="564.6" r="1" fill="#90a4d4" opacity="0.09"/><circle cx="1462.8" cy="747.4" r="0.8" fill="#90a4d4" opacity="0.21"/><circle cx="1708.5" cy="446.4" r="1" fill="#90a4d4" opacity="0.28"/><circle cx="386.2" cy="259.1" r="1" fill="#90a4d4" opacity="0.20"/><circle cx="1397.5" cy="335.4" r="1.4" fill="#90a4d4" opacity="0.18"/><circle cx="239.9" cy="936.4" r="1" fill="#90a4d4" opacity="0.30"/><circle cx="1212.3" cy="838.7" r="1.4" fill="#90a4d4" opacity="0.18"/><circle cx="1679.4" cy="516.2" r="1.4" fill="#90a4d4" opacity="0.12"/><circle cx="934.3" cy="898.1" r="1" fill="#90a4d4" opacity="0.23"/><circle cx="1420.2" cy="154.1" r="1" fill="#90a4d4" opacity="0.19"/><circle cx="1327.1" cy="572.6" r="1" fill="#90a4d4" opacity="0.24"/><circle cx="971.2" cy="496.5" r="0.8" fill="#90a4d4" opacity="0.29"/><circle cx="104.0" cy="196.9" r="0.8" fill="#90a4d4" opacity="0.27"/><circle cx="929.1" cy="578.0" r="0.8" fill="#90a4d4" opacity="0.19"/><circle cx="1120.9" cy="520.2" r="1.4" fill="#90a4d4" opacity="0.13"/><circle cx="507.2" cy="522.9" r="1.2" fill="#90a4d4" opacity="0.20"/><circle cx="453.2" cy="538.4" r="1" fill="#90a4d4" opacity="0.30"/><circle cx="1633.7" cy="208.5" r="1.2" fill="#90a4d4" opacity="0.11"/><circle cx="222.6" cy="454.9" r="0.8" fill="#90a4d4" opacity="0.24"/><circle cx="783.9" cy="218.9" r="1" fill="#90a4d4" opacity="0.27"/><circle cx="1641.6" cy="158.9" r="1.7" fill="#90a4d4" opacity="0.23"/><circle cx="670.1" cy="260.4" r="1" fill="#90a4d4" opacity="0.31"/><circle cx="401.8" cy="980.1" r="1.2" fill="#90a4d4" opacity="0.29"/><circle cx="297.9" cy="687.2" r="1" fill="#90a4d4" opacity="0.12"/><circle cx="789.7" cy="530.6" r="1" fill="#90a4d4" opacity="0.18"/><circle cx="652.6" cy="94.9" r="1" fill="#90a4d4" opacity="0.08"/><circle cx="1013.9" cy="453.2" r="0.8" fill="#90a4d4" opacity="0.17"/><circle cx="946.9" cy="304.0" r="0.8" fill="#90a4d4" opacity="0.11"/><circle cx="1680.9" cy="235.2" r="0.8" fill="#90a4d4" opacity="0.10"/><circle cx="497.6" cy="932.2" r="1" fill="#90a4d4" opacity="0.14"/><circle cx="237.1" cy="434.5" r="1.7" fill="#90a4d4" opacity="0.28"/><circle cx="473.3" cy="153.7" r="1.4" fill="#90a4d4" opacity="0.22"/><circle cx="1281.8" cy="92.1" r="0.8" fill="#90a4d4" opacity="0.27"/><circle cx="335.5" cy="921.2" r="1" fill="#90a4d4" opacity="0.31"/><circle cx="1161.0" cy="824.9" r="0.8" fill="#90a4d4" opacity="0.23"/><circle cx="407.0" cy="272.1" r="0.8" fill="#90a4d4" opacity="0.19"/><circle cx="620.6" cy="569.1" r="1" fill="#90a4d4" opacity="0.23"/><circle cx="79.1" cy="730.1" r="0.8" fill="#90a4d4" opacity="0.31"/><circle cx="479.3" cy="186.4" r="1" fill="#90a4d4" opacity="0.23"/><circle cx="971.9" cy="211.8" r="1.2" fill="#90a4d4" opacity="0.20"/><circle cx="325.6" cy="357.1" r="0.8" fill="#90a4d4" opacity="0.32"/><circle cx="67.6" cy="19.0" r="1.4" fill="#90a4d4" opacity="0.21"/><circle cx="346.7" cy="488.5" r="1.2" fill="#90a4d4" opacity="0.11"/><circle cx="1498.6" cy="444.7" r="1.2" fill="#90a4d4" opacity="0.21"/><circle cx="1626.4" cy="998.5" r="1" fill="#90a4d4" opacity="0.25"/><circle cx="1797.9" cy="352.6" r="1.7" fill="#90a4d4" opacity="0.25"/><circle cx="255.7" cy="1018.1" r="0.8" fill="#90a4d4" opacity="0.28"/><circle cx="26.1" cy="643.6" r="1" fill="#90a4d4" opacity="0.18"/><circle cx="101.4" cy="684.5" r="1.2" fill="#90a4d4" opacity="0.29"/><circle cx="1227.1" cy="290.1" r="1" fill="#90a4d4" opacity="0.25"/><circle cx="82.8" cy="190.7" r="1" fill="#90a4d4" opacity="0.19"/><circle cx="481.7" cy="989.7" r="1.4" fill="#90a4d4" opacity="0.16"/><circle cx="63.0" cy="908.0" r="1" fill="#90a4d4" opacity="0.17"/><circle cx="2.0" cy="392.7" r="1.2" fill="#90a4d4" opacity="0.15"/><circle cx="1200.5" cy="255.4" r="0.8" fill="#90a4d4" opacity="0.10"/><circle cx="1495.2" cy="148.0" r="1.4" fill="#90a4d4" opacity="0.09"/><circle cx="41.2" cy="313.1" r="1" fill="#90a4d4" opacity="0.10"/><circle cx="1752.5" cy="878.0" r="1" fill="#90a4d4" opacity="0.24"/><circle cx="1310.3" cy="904.6" r="1.2" fill="#90a4d4" opacity="0.26"/><circle cx="1318.8" cy="508.5" r="1" fill="#90a4d4" opacity="0.25"/><circle cx="1177.1" cy="45.1" r="1.7" fill="#90a4d4" opacity="0.29"/><circle cx="1148.0" cy="755.1" r="1.4" fill="#90a4d4" opacity="0.11"/><circle cx="958.5" cy="519.0" r="0.8" fill="#90a4d4" opacity="0.28"/><circle cx="1068.8" cy="918.7" r="1.7" fill="#90a4d4" opacity="0.31"/><circle cx="1176.5" cy="87.6" r="0.8" fill="#90a4d4" opacity="0.11"/><circle cx="660.1" cy="108.0" r="1.2" fill="#90a4d4" opacity="0.21"/><circle cx="1148.8" cy="644.4" r="1.7" fill="#90a4d4" opacity="0.14"/><circle cx="482.7" cy="470.2" r="0.8" fill="#90a4d4" opacity="0.26"/><circle cx="920.4" cy="550.7" r="1.7" fill="#90a4d4" opacity="0.21"/><circle cx="1364.7" cy="487.6" r="0.8" fill="#90a4d4" opacity="0.28"/><circle cx="429.7" cy="778.4" r="1" fill="#90a4d4" opacity="0.26"/><circle cx="1785.6" cy="508.3" r="1.2" fill="#90a4d4" opacity="0.10"/><circle cx="1666.2" cy="295.7" r="0.8" fill="#90a4d4" opacity="0.23"/><circle cx="1176.3" cy="79.7" r="1" fill="#90a4d4" opacity="0.16"/><circle cx="1192.3" cy="713.0" r="1.4" fill="#90a4d4" opacity="0.22"/><circle cx="22.8" cy="62.4" r="1" fill="#90a4d4" opacity="0.31"/><circle cx="182.1" cy="224.0" r="1.2" fill="#90a4d4" opacity="0.15"/><circle cx="945.3" cy="478.1" r="1.2" fill="#90a4d4" opacity="0.26"/><circle cx="1817.7" cy="565.0" r="1" fill="#90a4d4" opacity="0.31"/><circle cx="1713.3" cy="18.0" r="1.2" fill="#90a4d4" opacity="0.10"/><circle cx="927.1" cy="1023.5" r="1" fill="#90a4d4" opacity="0.17"/><circle cx="1677.3" cy="957.5" r="0.8" fill="#90a4d4" opacity="0.22"/><circle cx="259.4" cy="539.3" r="1" fill="#90a4d4" opacity="0.11"/><circle cx="1501.0" cy="523.5" r="0.8" fill="#90a4d4" opacity="0.25"/><circle cx="423.4" cy="923.7" r="1.2" fill="#90a4d4" opacity="0.17"/><circle cx="291.1" cy="977.5" r="1.7" fill="#90a4d4" opacity="0.19"/><circle cx="552.6" cy="144.8" r="1" fill="#90a4d4" opacity="0.17"/><circle cx="221.3" cy="340.9" r="1" fill="#90a4d4" opacity="0.26"/><circle cx="1535.6" cy="123.5" r="1" fill="#90a4d4" opacity="0.25"/><circle cx="1649.9" cy="298.2" r="1" fill="#90a4d4" opacity="0.10"/><circle cx="714.0" cy="895.2" r="0.8" fill="#90a4d4" opacity="0.17"/><circle cx="783.3" cy="283.1" r="0.8" fill="#90a4d4" opacity="0.15"/><circle cx="94.5" cy="681.2" r="1.7" fill="#90a4d4" opacity="0.30"/><circle cx="456.3" cy="273.4" r="1.4" fill="#90a4d4" opacity="0.16"/><circle cx="1414.9" cy="807.9" r="1.2" fill="#90a4d4" opacity="0.29"/><circle cx="1485.9" cy="649.2" r="1.4" fill="#90a4d4" opacity="0.21"/><circle cx="1316.8" cy="50.9" r="1.7" fill="#90a4d4" opacity="0.18"/><circle cx="1125.3" cy="142.6" r="1" fill="#90a4d4" opacity="0.20"/><circle cx="1668.8" cy="566.1" r="1" fill="#90a4d4" opacity="0.19"/><circle cx="628.9" cy="306.4" r="1.7" fill="#90a4d4" opacity="0.26"/><circle cx="1194.7" cy="418.0" r="1" fill="#90a4d4" opacity="0.15"/><circle cx="1019.9" cy="405.8" r="1" fill="#90a4d4" opacity="0.23"/><circle cx="137.6" cy="515.1" r="1.2" fill="#90a4d4" opacity="0.21"/><circle cx="829.0" cy="342.5" r="1.2" fill="#90a4d4" opacity="0.18"/><circle cx="1002.4" cy="251.2" r="1" fill="#90a4d4" opacity="0.16"/><circle cx="166.7" cy="246.1" r="1" fill="#90a4d4" opacity="0.27"/><circle cx="369.9" cy="20.7" r="1.2" fill="#90a4d4" opacity="0.17"/><circle cx="1364.9" cy="216.1" r="1" fill="#90a4d4" opacity="0.16"/><circle cx="113.6" cy="285.6" r="1" fill="#90a4d4" opacity="0.11"/><circle cx="921.2" cy="647.9" r="1" fill="#90a4d4" opacity="0.10"/><circle cx="1641.1" cy="395.7" r="1.7" fill="#90a4d4" opacity="0.19"/><circle cx="1745.7" cy="873.3" r="0.8" fill="#90a4d4" opacity="0.11"/><circle cx="778.1" cy="785.8" r="1.2" fill="#90a4d4" opacity="0.31"/><circle cx="896.4" cy="75.3" r="1.4" fill="#90a4d4" opacity="0.29"/><circle cx="1779.2" cy="255.7" r="0.8" fill="#90a4d4" opacity="0.13"/><circle cx="278.3" cy="1000.1" r="0.8" fill="#90a4d4" opacity="0.31"/><circle cx="1320.8" cy="666.1" r="1.2" fill="#90a4d4" opacity="0.10"/><circle cx="1421.7" cy="1.4" r="1" fill="#90a4d4" opacity="0.14"/><circle cx="1683.5" cy="664.2" r="1" fill="#90a4d4" opacity="0.31"/><circle cx="1146.4" cy="543.6" r="1.2" fill="#90a4d4" opacity="0.25"/><circle cx="205.2" cy="72.4" r="1.4" fill="#90a4d4" opacity="0.31"/><circle cx="350.8" cy="268.4" r="1.4" fill="#90a4d4" opacity="0.08"/><circle cx="983.6" cy="1025.3" r="1" fill="#90a4d4" opacity="0.31"/><circle cx="1179.6" cy="909.4" r="1.2" fill="#90a4d4" opacity="0.21"/><circle cx="1001.0" cy="30.1" r="1.2" fill="#90a4d4" opacity="0.25"/><circle cx="562.5" cy="22.4" r="1.2" fill="#90a4d4" opacity="0.29"/><circle cx="1184.3" cy="83.4" r="1" fill="#90a4d4" opacity="0.24"/><circle cx="1693.0" cy="233.4" r="0.8" fill="#90a4d4" opacity="0.25"/><circle cx="1314.5" cy="372.8" r="1.2" fill="#90a4d4" opacity="0.13"/><circle cx="1458.6" cy="760.6" r="1.4" fill="#90a4d4" opacity="0.10"/><circle cx="907.1" cy="206.2" r="1" fill="#90a4d4" opacity="0.14"/><circle cx="405.2" cy="782.5" r="1" fill="#90a4d4" opacity="0.11"/><circle cx="1141.2" cy="627.8" r="1" fill="#90a4d4" opacity="0.20"/><circle cx="1666.0" cy="58.1" r="1.4" fill="#90a4d4" opacity="0.12"/><circle cx="720.0" cy="219.1" r="1.4" fill="#90a4d4" opacity="0.11"/><circle cx="94.9" cy="61.9" r="1.2" fill="#90a4d4" opacity="0.19"/><circle cx="1303.0" cy="323.3" r="0.8" fill="#90a4d4" opacity="0.32"/><circle cx="1704.8" cy="338.8" r="1" fill="#90a4d4" opacity="0.24"/><circle cx="960.4" cy="481.2" r="1" fill="#90a4d4" opacity="0.24"/><circle cx="692.9" cy="384.7" r="1" fill="#90a4d4" opacity="0.19"/><circle cx="199.4" cy="80.5" r="0.8" fill="#90a4d4" opacity="0.16"/><circle cx="1748.6" cy="127.3" r="1" fill="#90a4d4" opacity="0.17"/><circle cx="1406.8" cy="317.7" r="1.2" fill="#90a4d4" opacity="0.10"/><circle cx="1290.6" cy="201.4" r="1.4" fill="#90a4d4" opacity="0.30"/><circle cx="353.2" cy="374.8" r="1.2" fill="#90a4d4" opacity="0.09"/><circle cx="751.8" cy="835.4" r="1.2" fill="#90a4d4" opacity="0.09"/><circle cx="63.8" cy="64.4" r="0.8" fill="#90a4d4" opacity="0.14"/><circle cx="1367.5" cy="924.6" r="1" fill="#90a4d4" opacity="0.17"/><circle cx="613.0" cy="981.4" r="0.8" fill="#90a4d4" opacity="0.14"/><circle cx="1311.4" cy="325.7" r="1" fill="#90a4d4" opacity="0.15"/><circle cx="1320.5" cy="612.8" r="1.7" fill="#90a4d4" opacity="0.31"/><circle cx="119.6" cy="850.0" r="0.8" fill="#90a4d4" opacity="0.19"/><circle cx="1750.9" cy="981.6" r="1.2" fill="#90a4d4" opacity="0.27"/><circle cx="1671.8" cy="838.4" r="1" fill="#90a4d4" opacity="0.30"/><circle cx="334.8" cy="825.8" r="1.7" fill="#90a4d4" opacity="0.15"/><circle cx="1266.6" cy="155.7" r="1" fill="#90a4d4" opacity="0.16"/><circle cx="584.8" cy="372.4" r="1.4" fill="#90a4d4" opacity="0.10"/><circle cx="361.1" cy="774.7" r="1" fill="#90a4d4" opacity="0.18"/><circle cx="1188.7" cy="495.7" r="1.4" fill="#90a4d4" opacity="0.16"/><circle cx="1793.9" cy="909.1" r="0.8" fill="#90a4d4" opacity="0.14"/><circle cx="153.9" cy="99.2" r="1.2" fill="#90a4d4" opacity="0.32"/><circle cx="1779.0" cy="178.2" r="1" fill="#90a4d4" opacity="0.18"/><circle cx="1135.2" cy="693.7" r="1.7" fill="#90a4d4" opacity="0.21"/><circle cx="1416.2" cy="781.6" r="1" fill="#90a4d4" opacity="0.15"/><circle cx="1037.4" cy="383.8" r="1.7" fill="#90a4d4" opacity="0.14"/><circle cx="804.1" cy="191.1" r="1" fill="#90a4d4" opacity="0.12"/><circle cx="1618.0" cy="595.1" r="1" fill="#90a4d4" opacity="0.10"/><circle cx="460.5" cy="253.1" r="1.4" fill="#90a4d4" opacity="0.14"/><circle cx="1479.5" cy="672.3" r="0.8" fill="#90a4d4" opacity="0.10"/><circle cx="868.8" cy="842.9" r="1.2" fill="#90a4d4" opacity="0.30"/><circle cx="73.9" cy="302.2" r="0.8" fill="#90a4d4" opacity="0.09"/><circle cx="1098.9" cy="851.9" r="1" fill="#90a4d4" opacity="0.30"/><circle cx="681.2" cy="891.2" r="1.2" fill="#90a4d4" opacity="0.22"/><circle cx="1418.2" cy="684.0" r="0.8" fill="#90a4d4" opacity="0.11"/><circle cx="1090.9" cy="637.9" r="1" fill="#90a4d4" opacity="0.09"/><circle cx="622.2" cy="45.4" r="1" fill="#90a4d4" opacity="0.09"/><circle cx="1340.0" cy="940.5" r="0.8" fill="#90a4d4" opacity="0.28"/><circle cx="748.5" cy="382.6" r="1.4" fill="#90a4d4" opacity="0.15"/><circle cx="372.2" cy="818.3" r="1.4" fill="#90a4d4" opacity="0.20"/><circle cx="747.0" cy="818.9" r="1.7" fill="#90a4d4" opacity="0.21"/><circle cx="1169.7" cy="93.8" r="1" fill="#90a4d4" opacity="0.18"/><circle cx="496.2" cy="1016.9" r="1.7" fill="#90a4d4" opacity="0.15"/><circle cx="1744.3" cy="321.4" r="1.4" fill="#90a4d4" opacity="0.29"/><circle cx="757.8" cy="18.7" r="1" fill="#90a4d4" opacity="0.23"/><circle cx="715.0" cy="416.7" r="0.8" fill="#90a4d4" opacity="0.18"/><circle cx="286.5" cy="116.8" r="0.8" fill="#90a4d4" opacity="0.18"/><circle cx="1615.6" cy="474.3" r="1" fill="#90a4d4" opacity="0.11"/><circle cx="94.6" cy="146.6" r="1.2" fill="#90a4d4" opacity="0.10"/><circle cx="1138.6" cy="381.6" r="1.4" fill="#90a4d4" opacity="0.12"/><circle cx="636.7" cy="166.5" r="1" fill="#90a4d4" opacity="0.30"/><circle cx="199.1" cy="504.7" r="1" fill="#90a4d4" opacity="0.15"/><circle cx="1532.2" cy="44.8" r="1.2" fill="#90a4d4" opacity="0.16"/><circle cx="1112.0" cy="654.8" r="0.8" fill="#90a4d4" opacity="0.30"/><circle cx="1135.2" cy="848.5" r="1" fill="#90a4d4" opacity="0.23"/><circle cx="1567.6" cy="639.1" r="1.4" fill="#90a4d4" opacity="0.28"/><circle cx="1517.4" cy="188.3" r="1" fill="#90a4d4" opacity="0.09"/><circle cx="1717.5" cy="161.0" r="1" fill="#90a4d4" opacity="0.11"/><circle cx="452.1" cy="745.9" r="1" fill="#90a4d4" opacity="0.09"/><circle cx="1029.1" cy="779.4" r="0.8" fill="#90a4d4" opacity="0.24"/><circle cx="593.3" cy="401.1" r="1.2" fill="#90a4d4" opacity="0.21"/><circle cx="1147.5" cy="315.1" r="1.2" fill="#90a4d4" opacity="0.15"/><circle cx="456.1" cy="400.5" r="1" fill="#90a4d4" opacity="0.19"/><circle cx="802.2" cy="24.1" r="1.4" fill="#90a4d4" opacity="0.32"/><circle cx="851.4" cy="459.8" r="1.4" fill="#90a4d4" opacity="0.27"/><circle cx="838.7" cy="184.8" r="1.2" fill="#90a4d4" opacity="0.18"/><circle cx="122.8" cy="369.0" r="1" fill="#90a4d4" opacity="0.10"/><circle cx="808.8" cy="525.0" r="0.8" fill="#90a4d4" opacity="0.09"/><circle cx="238.4" cy="948.9" r="1" fill="#90a4d4" opacity="0.27"/><circle cx="936.0" cy="55.8" r="1.4" fill="#90a4d4" opacity="0.29"/><circle cx="1194.5" cy="807.0" r="0.8" fill="#90a4d4" opacity="0.29"/><circle cx="1822.9" cy="753.3" r="0.8" fill="#90a4d4" opacity="0.13"/><circle cx="1796.6" cy="506.1" r="1" fill="#90a4d4" opacity="0.24"/><circle cx="1319.6" cy="227.5" r="1" fill="#90a4d4" opacity="0.23"/><circle cx="461.6" cy="333.2" r="1.4" fill="#90a4d4" opacity="0.15"/><circle cx="1492.6" cy="147.7" r="1.4" fill="#90a4d4" opacity="0.31"/><circle cx="878.6" cy="609.1" r="1.4" fill="#90a4d4" opacity="0.20"/><circle cx="583.9" cy="37.9" r="1" fill="#90a4d4" opacity="0.18"/><circle cx="1164.9" cy="286.3" r="1" fill="#90a4d4" opacity="0.29"/><circle cx="308.8" cy="807.6" r="0.8" fill="#90a4d4" opacity="0.26"/><circle cx="88.9" cy="883.2" r="1.2" fill="#90a4d4" opacity="0.21"/><circle cx="1061.5" cy="908.1" r="0.8" fill="#90a4d4" opacity="0.14"/><circle cx="980.3" cy="881.4" r="1.7" fill="#90a4d4" opacity="0.27"/><circle cx="484.5" cy="1019.2" r="1.4" fill="#90a4d4" opacity="0.12"/><circle cx="605.4" cy="83.7" r="1" fill="#90a4d4" opacity="0.12"/><circle cx="1360.8" cy="49.7" r="1.4" fill="#90a4d4" opacity="0.14"/><circle cx="1169.8" cy="1012.6" r="1.4" fill="#90a4d4" opacity="0.30"/><circle cx="1639.2" cy="754.3" r="1.7" fill="#90a4d4" opacity="0.09"/><circle cx="273.3" cy="633.9" r="1.2" fill="#90a4d4" opacity="0.18"/><circle cx="666.3" cy="49.2" r="1.2" fill="#90a4d4" opacity="0.13"/><circle cx="1195.2" cy="22.9" r="0.8" fill="#90a4d4" opacity="0.22"/><circle cx="555.8" cy="538.3" r="1.4" fill="#90a4d4" opacity="0.13"/><circle cx="1068.0" cy="606.2" r="1" fill="#90a4d4" opacity="0.17"/><circle cx="1516.1" cy="163.2" r="0.8" fill="#90a4d4" opacity="0.30"/><circle cx="445.8" cy="153.6" r="0.8" fill="#90a4d4" opacity="0.10"/><circle cx="264.8" cy="684.8" r="1" fill="#90a4d4" opacity="0.18"/><circle cx="483.6" cy="11.8" r="1.7" fill="#90a4d4" opacity="0.28"/><circle cx="1633.6" cy="612.0" r="1.4" fill="#90a4d4" opacity="0.19"/><circle cx="1715.0" cy="754.8" r="1" fill="#90a4d4" opacity="0.12"/><circle cx="0.7" cy="63.3" r="0.8" fill="#90a4d4" opacity="0.18"/><circle cx="434.9" cy="60.1" r="0.8" fill="#90a4d4" opacity="0.08"/><circle cx="1008.2" cy="968.2" r="1" fill="#90a4d4" opacity="0.18"/><circle cx="948.4" cy="661.3" r="1.7" fill="#90a4d4" opacity="0.23"/><circle cx="1488.5" cy="179.7" r="1" fill="#90a4d4" opacity="0.10"/><circle cx="1145.5" cy="1022.9" r="1.7" fill="#90a4d4" opacity="0.27"/><circle cx="1309.2" cy="6.5" r="1.2" fill="#90a4d4" opacity="0.26"/><circle cx="851.4" cy="763.3" r="1.2" fill="#90a4d4" opacity="0.12"/><circle cx="1823.8" cy="269.0" r="1.7" fill="#90a4d4" opacity="0.09"/><circle cx="614.0" cy="771.4" r="1.7" fill="#90a4d4" opacity="0.31"/><circle cx="481.8" cy="54.1" r="1.7" fill="#90a4d4" opacity="0.21"/><circle cx="798.0" cy="811.3" r="1.4" fill="#90a4d4" opacity="0.31"/><circle cx="541.0" cy="955.5" r="1" fill="#90a4d4" opacity="0.10"/><circle cx="928.6" cy="174.7" r="1" fill="#90a4d4" opacity="0.28"/><circle cx="371.1" cy="163.8" r="1" fill="#90a4d4" opacity="0.13"/><circle cx="711.3" cy="618.7" r="1.2" fill="#90a4d4" opacity="0.30"/><circle cx="1154.2" cy="712.9" r="1.7" fill="#90a4d4" opacity="0.28"/><circle cx="981.5" cy="485.8" r="1.4" fill="#90a4d4" opacity="0.25"/><circle cx="1569.3" cy="449.9" r="1.7" fill="#90a4d4" opacity="0.14"/><circle cx="1619.1" cy="812.1" r="1.2" fill="#90a4d4" opacity="0.23"/><circle cx="142.4" cy="937.2" r="1" fill="#90a4d4" opacity="0.09"/><circle cx="204.8" cy="640.0" r="1" fill="#90a4d4" opacity="0.16"/><circle cx="259.6" cy="29.6" r="0.8" fill="#90a4d4" opacity="0.11"/><circle cx="1177.7" cy="43.9" r="0.8" fill="#90a4d4" opacity="0.26"/><circle cx="120.4" cy="607.6" r="1" fill="#90a4d4" opacity="0.13"/><circle cx="1746.9" cy="549.4" r="1.7" fill="#90a4d4" opacity="0.10"/><circle cx="1588.1" cy="940.9" r="1.2" fill="#90a4d4" opacity="0.11"/><circle cx="376.5" cy="115.2" r="0.8" fill="#90a4d4" opacity="0.31"/><circle cx="1667.3" cy="775.6" r="0.8" fill="#90a4d4" opacity="0.28"/><circle cx="1155.7" cy="295.7" r="0.8" fill="#90a4d4" opacity="0.11"/><circle cx="1449.3" cy="665.1" r="1" fill="#90a4d4" opacity="0.16"/><circle cx="775.5" cy="21.5" r="1" fill="#90a4d4" opacity="0.30"/><circle cx="88.6" cy="781.9" r="1" fill="#90a4d4" opacity="0.26"/><circle cx="1101.7" cy="489.9" r="1" fill="#90a4d4" opacity="0.23"/><circle cx="56.7" cy="424.9" r="1.2" fill="#90a4d4" opacity="0.20"/><circle cx="179.9" cy="482.5" r="0.8" fill="#90a4d4" opacity="0.21"/><circle cx="396.3" cy="887.2" r="0.8" fill="#90a4d4" opacity="0.22"/><circle cx="525.4" cy="448.7" r="1.4" fill="#90a4d4" opacity="0.13"/><circle cx="1394.8" cy="1006.2" r="0.8" fill="#90a4d4" opacity="0.16"/><circle cx="175.1" cy="715.4" r="1" fill="#90a4d4" opacity="0.31"/><circle cx="1084.4" cy="985.0" r="1.4" fill="#90a4d4" opacity="0.14"/><circle cx="1727.3" cy="292.0" r="1" fill="#90a4d4" opacity="0.31"/><circle cx="423.7" cy="170.6" r="1.7" fill="#90a4d4" opacity="0.26"/><circle cx="897.2" cy="1019.9" r="1.4" fill="#90a4d4" opacity="0.27"/><circle cx="1149.1" cy="365.9" r="1.2" fill="#90a4d4" opacity="0.30"/><circle cx="1632.1" cy="766.8" r="1.2" fill="#90a4d4" opacity="0.29"/><circle cx="46.1" cy="212.1" r="1" fill="#90a4d4" opacity="0.18"/><circle cx="997.2" cy="176.1" r="1.7" fill="#90a4d4" opacity="0.14"/><circle cx="843.5" cy="547.0" r="1.7" fill="#90a4d4" opacity="0.26"/><circle cx="1182.7" cy="358.6" r="1" fill="#90a4d4" opacity="0.21"/><circle cx="1588.4" cy="463.4" r="1.4" fill="#90a4d4" opacity="0.26"/><circle cx="310.3" cy="451.5" r="1" fill="#90a4d4" opacity="0.22"/><circle cx="230.7" cy="475.4" r="1.7" fill="#90a4d4" opacity="0.14"/><circle cx="350.6" cy="310.3" r="1.7" fill="#90a4d4" opacity="0.28"/><circle cx="1129.7" cy="744.3" r="1" fill="#90a4d4" opacity="0.25"/><circle cx="1103.3" cy="358.7" r="1" fill="#90a4d4" opacity="0.16"/><circle cx="346.4" cy="1003.4" r="1.7" fill="#90a4d4" opacity="0.32"/><circle cx="301.2" cy="677.0" r="1" fill="#90a4d4" opacity="0.17"/><circle cx="1800.4" cy="817.9" r="1.7" fill="#90a4d4" opacity="0.15"/><circle cx="501.1" cy="112.4" r="0.8" fill="#90a4d4" opacity="0.15"/><circle cx="1620.0" cy="477.4" r="0.8" fill="#90a4d4" opacity="0.18"/><circle cx="1447.5" cy="713.5" r="1.4" fill="#90a4d4" opacity="0.32"/><circle cx="542.1" cy="22.8" r="1" fill="#90a4d4" opacity="0.22"/><circle cx="740.6" cy="762.4" r="1.2" fill="#90a4d4" opacity="0.25"/><circle cx="1075.0" cy="666.0" r="1" fill="#90a4d4" opacity="0.24"/><circle cx="1194.0" cy="903.1" r="1.7" fill="#90a4d4" opacity="0.25"/><circle cx="1560.0" cy="699.3" r="1.7" fill="#90a4d4" opacity="0.11"/><circle cx="791.5" cy="267.3" r="1.7" fill="#90a4d4" opacity="0.10"/><circle cx="767.8" cy="805.1" r="1.7" fill="#90a4d4" opacity="0.25"/><circle cx="286.3" cy="874.1" r="1.2" fill="#90a4d4" opacity="0.19"/><circle cx="1137.5" cy="421.2" r="1.7" fill="#90a4d4" opacity="0.24"/><circle cx="1597.6" cy="920.4" r="1" fill="#90a4d4" opacity="0.27"/><circle cx="711.3" cy="504.0" r="0.8" fill="#90a4d4" opacity="0.09"/><circle cx="994.3" cy="165.5" r="1" fill="#90a4d4" opacity="0.20"/><circle cx="185.0" cy="591.2" r="1.4" fill="#90a4d4" opacity="0.13"/><circle cx="870.6" cy="16.6" r="1" fill="#90a4d4" opacity="0.21"/><circle cx="750.9" cy="975.5" r="1" fill="#90a4d4" opacity="0.32"/><circle cx="336.4" cy="528.7" r="0.8" fill="#90a4d4" opacity="0.25"/><circle cx="1123.6" cy="656.1" r="1" fill="#90a4d4" opacity="0.15"/><circle cx="731.4" cy="13.7" r="1.2" fill="#90a4d4" opacity="0.30"/><circle cx="1150.3" cy="694.5" r="1.4" fill="#90a4d4" opacity="0.14"/><circle cx="410.7" cy="763.0" r="1.4" fill="#90a4d4" opacity="0.31"/><circle cx="1819.4" cy="988.7" r="1.2" fill="#90a4d4" opacity="0.13"/><circle cx="236.6" cy="799.1" r="1.7" fill="#90a4d4" opacity="0.13"/><circle cx="1175.2" cy="741.6" r="1" fill="#90a4d4" opacity="0.16"/><circle cx="1169.0" cy="842.5" r="1.2" fill="#90a4d4" opacity="0.19"/><circle cx="538.6" cy="564.2" r="1" fill="#90a4d4" opacity="0.27"/><circle cx="859.0" cy="806.3" r="1" fill="#90a4d4" opacity="0.14"/><circle cx="688.4" cy="260.9" r="1.2" fill="#90a4d4" opacity="0.24"/><circle cx="881.3" cy="828.8" r="1" fill="#90a4d4" opacity="0.17"/><circle cx="1197.6" cy="329.6" r="1.2" fill="#90a4d4" opacity="0.18"/><circle cx="1166.3" cy="678.4" r="1" fill="#90a4d4" opacity="0.12"/><circle cx="554.8" cy="396.3" r="0.8" fill="#90a4d4" opacity="0.28"/><circle cx="1657.6" cy="806.8" r="1" fill="#90a4d4" opacity="0.21"/><circle cx="631.6" cy="599.3" r="1.7" fill="#90a4d4" opacity="0.08"/><circle cx="1741.7" cy="675.0" r="1" fill="#90a4d4" opacity="0.23"/><circle cx="1058.6" cy="878.9" r="1" fill="#90a4d4" opacity="0.27"/><circle cx="634.0" cy="157.1" r="1.2" fill="#90a4d4" opacity="0.27"/><circle cx="307.3" cy="917.0" r="1.4" fill="#90a4d4" opacity="0.31"/><circle cx="165.4" cy="927.8" r="1.4" fill="#90a4d4" opacity="0.27"/><circle cx="1535.0" cy="203.1" r="1.7" fill="#90a4d4" opacity="0.13"/><circle cx="143.9" cy="863.6" r="1.7" fill="#90a4d4" opacity="0.29"/><circle cx="1015.8" cy="272.2" r="1" fill="#90a4d4" opacity="0.28"/><circle cx="866.0" cy="573.4" r="1.2" fill="#90a4d4" opacity="0.19"/><circle cx="264.3" cy="505.6" r="1.2" fill="#90a4d4" opacity="0.12"/><circle cx="1097.3" cy="755.9" r="1" fill="#90a4d4" opacity="0.28"/><circle cx="856.4" cy="578.9" r="1.7" fill="#90a4d4" opacity="0.15"/><circle cx="852.3" cy="438.2" r="1.7" fill="#90a4d4" opacity="0.10"/><circle cx="1165.8" cy="654.6" r="0.8" fill="#90a4d4" opacity="0.08"/><circle cx="83.9" cy="757.9" r="1" fill="#90a4d4" opacity="0.27"/><circle cx="172.0" cy="498.2" r="1" fill="#90a4d4" opacity="0.09"/><circle cx="1314.3" cy="643.4" r="1" fill="#90a4d4" opacity="0.10"/><circle cx="1206.0" cy="351.2" r="1.4" fill="#90a4d4" opacity="0.21"/><circle cx="1669.6" cy="292.4" r="1" fill="#90a4d4" opacity="0.18"/><circle cx="1013.9" cy="850.7" r="1" fill="#90a4d4" opacity="0.17"/><circle cx="903.5" cy="343.4" r="1" fill="#90a4d4" opacity="0.29"/><circle cx="631.0" cy="209.4" r="1.2" fill="#90a4d4" opacity="0.27"/><circle cx="605.5" cy="326.3" r="1" fill="#90a4d4" opacity="0.11"/><circle cx="1780.1" cy="90.1" r="0.8" fill="#90a4d4" opacity="0.18"/><circle cx="1014.4" cy="417.8" r="1.4" fill="#90a4d4" opacity="0.09"/><circle cx="549.7" cy="6.4" r="1" fill="#90a4d4" opacity="0.28"/><circle cx="869.3" cy="788.2" r="0.8" fill="#90a4d4" opacity="0.27"/><circle cx="1665.0" cy="629.5" r="1.4" fill="#90a4d4" opacity="0.12"/><circle cx="1232.9" cy="709.1" r="1.7" fill="#90a4d4" opacity="0.10"/><circle cx="72.2" cy="652.0" r="1.7" fill="#90a4d4" opacity="0.26"/><circle cx="185.5" cy="186.6" r="0.8" fill="#90a4d4" opacity="0.18"/><circle cx="184.1" cy="957.5" r="0.8" fill="#90a4d4" opacity="0.17"/><circle cx="1505.4" cy="809.3" r="1.4" fill="#90a4d4" opacity="0.25"/><circle cx="1578.3" cy="190.1" r="0.8" fill="#90a4d4" opacity="0.16"/><circle cx="788.1" cy="660.4" r="0.8" fill="#90a4d4" opacity="0.20"/><circle cx="955.5" cy="848.7" r="1.2" fill="#90a4d4" opacity="0.22"/><circle cx="1681.1" cy="459.4" r="0.8" fill="#90a4d4" opacity="0.24"/><circle cx="1086.8" cy="1021.9" r="1.7" fill="#90a4d4" opacity="0.32"/><circle cx="870.1" cy="424.4" r="0.8" fill="#90a4d4" opacity="0.10"/><circle cx="864.1" cy="921.7" r="1.7" fill="#90a4d4" opacity="0.08"/><circle cx="8.8" cy="703.6" r="0.8" fill="#90a4d4" opacity="0.32"/><circle cx="1571.0" cy="224.6" r="0.8" fill="#90a4d4" opacity="0.11"/><circle cx="32.5" cy="740.2" r="1" fill="#90a4d4" opacity="0.19"/><circle cx="1361.9" cy="949.6" r="1" fill="#90a4d4" opacity="0.27"/><circle cx="1305.8" cy="880.3" r="1.7" fill="#90a4d4" opacity="0.26"/><circle cx="536.5" cy="573.7" r="1.2" fill="#90a4d4" opacity="0.19"/><circle cx="1706.2" cy="261.4" r="0.8" fill="#90a4d4" opacity="0.25"/><circle cx="20.9" cy="15.2" r="1.7" fill="#90a4d4" opacity="0.24"/><circle cx="1131.3" cy="400.2" r="1" fill="#90a4d4" opacity="0.26"/><circle cx="303.8" cy="885.9" r="1.2" fill="#90a4d4" opacity="0.23"/><circle cx="578.8" cy="976.3" r="1.7" fill="#90a4d4" opacity="0.19"/><circle cx="1238.7" cy="149.1" r="0.8" fill="#90a4d4" opacity="0.17"/><circle cx="1180.1" cy="648.0" r="1.2" fill="#90a4d4" opacity="0.19"/><circle cx="1423.9" cy="465.9" r="1" fill="#90a4d4" opacity="0.27"/><circle cx="1037.3" cy="300.9" r="0.8" fill="#90a4d4" opacity="0.23"/><circle cx="1191.2" cy="825.2" r="1.4" fill="#90a4d4" opacity="0.16"/><circle cx="1108.7" cy="1005.8" r="1" fill="#90a4d4" opacity="0.22"/><circle cx="564.7" cy="441.0" r="1" fill="#90a4d4" opacity="0.17"/><circle cx="1253.2" cy="619.2" r="1" fill="#90a4d4" opacity="0.27"/><circle cx="518.5" cy="1.7" r="1" fill="#90a4d4" opacity="0.14"/><circle cx="287.8" cy="947.3" r="0.8" fill="#90a4d4" opacity="0.15"/><circle cx="257.4" cy="916.4" r="1.4" fill="#90a4d4" opacity="0.12"/><circle cx="1784.9" cy="820.4" r="1.4" fill="#90a4d4" opacity="0.24"/><circle cx="1672.2" cy="356.9" r="0.8" fill="#90a4d4" opacity="0.21"/><circle cx="887.1" cy="392.8" r="1.7" fill="#90a4d4" opacity="0.30"/><circle cx="428.3" cy="624.5" r="1.7" fill="#90a4d4" opacity="0.17"/><circle cx="1296.3" cy="952.9" r="1.4" fill="#90a4d4" opacity="0.26"/><circle cx="1448.7" cy="473.0" r="0.8" fill="#90a4d4" opacity="0.21"/><circle cx="649.8" cy="64.4" r="1.2" fill="#90a4d4" opacity="0.22"/><circle cx="1641.4" cy="910.8" r="1.4" fill="#90a4d4" opacity="0.16"/><circle cx="926.3" cy="207.7" r="1" fill="#90a4d4" opacity="0.13"/><circle cx="330.7" cy="721.4" r="1" fill="#90a4d4" opacity="0.22"/><circle cx="656.8" cy="802.2" r="1" fill="#90a4d4" opacity="0.14"/><circle cx="1688.4" cy="507.6" r="0.8" fill="#90a4d4" opacity="0.17"/><circle cx="848.1" cy="84.1" r="1" fill="#90a4d4" opacity="0.22"/><circle cx="631.2" cy="534.5" r="0.8" fill="#90a4d4" opacity="0.10"/><circle cx="374.5" cy="896.0" r="1.4" fill="#90a4d4" opacity="0.20"/><circle cx="1037.9" cy="269.2" r="1" fill="#90a4d4" opacity="0.18"/><circle cx="1732.1" cy="789.5" r="1.4" fill="#90a4d4" opacity="0.31"/><circle cx="464.8" cy="39.0" r="1" fill="#90a4d4" opacity="0.32"/><circle cx="692.1" cy="28.3" r="0.8" fill="#90a4d4" opacity="0.21"/><circle cx="1593.3" cy="471.6" r="0.8" fill="#90a4d4" opacity="0.29"/><circle cx="1170.9" cy="948.9" r="1.7" fill="#90a4d4" opacity="0.31"/><circle cx="470.7" cy="580.8" r="1.7" fill="#90a4d4" opacity="0.10"/><circle cx="1685.2" cy="521.2" r="1" fill="#90a4d4" opacity="0.19"/><circle cx="292.3" cy="993.8" r="1.7" fill="#90a4d4" opacity="0.13"/><circle cx="70.7" cy="263.3" r="1" fill="#90a4d4" opacity="0.09"/><circle cx="1011.7" cy="28.6" r="0.8" fill="#90a4d4" opacity="0.14"/><circle cx="939.4" cy="761.0" r="1.2" fill="#90a4d4" opacity="0.09"/><circle cx="265.0" cy="776.8" r="1" fill="#90a4d4" opacity="0.24"/><circle cx="546.8" cy="608.6" r="1.7" fill="#90a4d4" opacity="0.11"/><circle cx="592.8" cy="264.5" r="0.8" fill="#90a4d4" opacity="0.17"/><circle cx="694.8" cy="454.2" r="1" fill="#90a4d4" opacity="0.30"/><circle cx="1632.7" cy="481.5" r="1" fill="#90a4d4" opacity="0.27"/><circle cx="287.2" cy="857.0" r="0.8" fill="#90a4d4" opacity="0.30"/><circle cx="1586.2" cy="914.5" r="1" fill="#90a4d4" opacity="0.27"/><circle cx="1753.1" cy="952.8" r="1.2" fill="#90a4d4" opacity="0.28"/><circle cx="1149.9" cy="465.5" r="1" fill="#90a4d4" opacity="0.16"/><circle cx="428.0" cy="119.0" r="1" fill="#90a4d4" opacity="0.11"/><circle cx="405.6" cy="58.4" r="1.7" fill="#90a4d4" opacity="0.19"/><circle cx="1627.5" cy="451.7" r="1" fill="#90a4d4" opacity="0.14"/><circle cx="753.6" cy="160.2" r="1" fill="#90a4d4" opacity="0.22"/><circle cx="542.7" cy="827.5" r="1" fill="#90a4d4" opacity="0.20"/><circle cx="582.1" cy="929.4" r="0.8" fill="#90a4d4" opacity="0.12"/><circle cx="939.6" cy="649.3" r="1.7" fill="#90a4d4" opacity="0.30"/><circle cx="1024.7" cy="859.5" r="0.8" fill="#90a4d4" opacity="0.14"/><circle cx="369.0" cy="374.8" r="1" fill="#90a4d4" opacity="0.32"/><circle cx="1692.9" cy="100.4" r="1" fill="#90a4d4" opacity="0.18"/><circle cx="296.8" cy="856.5" r="1" fill="#90a4d4" opacity="0.11"/><circle cx="1170.9" cy="454.9" r="1.4" fill="#90a4d4" opacity="0.16"/><circle cx="256.5" cy="2.0" r="1.4" fill="#90a4d4" opacity="0.15"/><circle cx="659.0" cy="41.7" r="1.2" fill="#90a4d4" opacity="0.13"/><circle cx="1045.6" cy="142.1" r="1" fill="#90a4d4" opacity="0.21"/><circle cx="421.7" cy="180.7" r="1.4" fill="#90a4d4" opacity="0.10"/><circle cx="160.0" cy="626.2" r="1.2" fill="#90a4d4" opacity="0.26"/><circle cx="320.8" cy="141.0" r="1.7" fill="#90a4d4" opacity="0.25"/><circle cx="1485.2" cy="599.8" r="1" fill="#90a4d4" opacity="0.08"/><circle cx="1266.8" cy="534.6" r="1.7" fill="#90a4d4" opacity="0.30"/><circle cx="948.8" cy="357.7" r="1" fill="#90a4d4" opacity="0.28"/><circle cx="1582.0" cy="507.3" r="0.8" fill="#90a4d4" opacity="0.18"/><circle cx="1396.3" cy="137.1" r="1.7" fill="#90a4d4" opacity="0.14"/><circle cx="340.5" cy="855.7" r="1" fill="#90a4d4" opacity="0.09"/><circle cx="1285.1" cy="591.6" r="0.8" fill="#90a4d4" opacity="0.17"/><circle cx="1705.8" cy="996.8" r="0.8" fill="#90a4d4" opacity="0.11"/><circle cx="1307.7" cy="840.2" r="1" fill="#90a4d4" opacity="0.27"/><circle cx="1588.6" cy="593.0" r="0.8" fill="#90a4d4" opacity="0.15"/><circle cx="953.6" cy="941.4" r="0.8" fill="#90a4d4" opacity="0.22"/><circle cx="1130.9" cy="561.9" r="0.8" fill="#90a4d4" opacity="0.15"/><circle cx="915.5" cy="933.5" r="1.2" fill="#90a4d4" opacity="0.15"/><circle cx="1355.4" cy="403.9" r="0.8" fill="#90a4d4" opacity="0.09"/><circle cx="1451.1" cy="349.0" r="1.5" fill="#90a4d4" opacity="0.22"/><circle cx="1255.8" cy="462.3" r="0.8" fill="#90a4d4" opacity="0.17"/><circle cx="985.5" cy="984.3" r="1.5" fill="#90a4d4" opacity="0.21"/><circle cx="1261.5" cy="713.4" r="1.2" fill="#90a4d4" opacity="0.11"/><circle cx="1052.0" cy="1005.0" r="1" fill="#90a4d4" opacity="0.31"/><circle cx="918.1" cy="864.1" r="1.5" fill="#90a4d4" opacity="0.28"/><circle cx="1090.3" cy="984.1" r="1.5" fill="#90a4d4" opacity="0.27"/><circle cx="1081.0" cy="448.2" r="0.8" fill="#90a4d4" opacity="0.19"/><circle cx="1477.7" cy="352.5" r="1" fill="#90a4d4" opacity="0.31"/><circle cx="1253.4" cy="444.6" r="1.2" fill="#90a4d4" opacity="0.30"/><circle cx="1505.1" cy="489.2" r="1.2" fill="#90a4d4" opacity="0.15"/><circle cx="1187.0" cy="748.5" r="0.8" fill="#90a4d4" opacity="0.18"/><circle cx="1300.3" cy="708.5" r="0.8" fill="#90a4d4" opacity="0.14"/><circle cx="1190.5" cy="753.0" r="1.5" fill="#90a4d4" opacity="0.29"/><circle cx="1358.9" cy="260.6" r="0.8" fill="#90a4d4" opacity="0.09"/><circle cx="1170.4" cy="467.0" r="1.2" fill="#90a4d4" opacity="0.33"/><circle cx="1167.8" cy="486.9" r="0.8" fill="#90a4d4" opacity="0.25"/><circle cx="939.6" cy="755.5" r="0.8" fill="#90a4d4" opacity="0.20"/><circle cx="1453.6" cy="321.0" r="1" fill="#90a4d4" opacity="0.11"/><circle cx="1326.9" cy="652.7" r="1.2" fill="#90a4d4" opacity="0.10"/><circle cx="1337.1" cy="666.0" r="1" fill="#90a4d4" opacity="0.32"/><circle cx="1411.5" cy="329.7" r="1.2" fill="#90a4d4" opacity="0.15"/><circle cx="1337.4" cy="488.3" r="1.5" fill="#90a4d4" opacity="0.24"/><circle cx="1172.5" cy="555.9" r="1.5" fill="#90a4d4" opacity="0.13"/><circle cx="1222.7" cy="425.7" r="1.5" fill="#90a4d4" opacity="0.21"/><circle cx="1112.3" cy="823.6" r="1" fill="#90a4d4" opacity="0.17"/><circle cx="798.6" cy="715.6" r="1.5" fill="#90a4d4" opacity="0.08"/><circle cx="1047.9" cy="719.4" r="1" fill="#90a4d4" opacity="0.17"/><circle cx="1073.6" cy="773.6" r="1" fill="#90a4d4" opacity="0.16"/><circle cx="1535.8" cy="606.5" r="1" fill="#90a4d4" opacity="0.23"/><circle cx="1191.9" cy="528.1" r="1.5" fill="#90a4d4" opacity="0.31"/><circle cx="1213.7" cy="853.3" r="0.8" fill="#90a4d4" opacity="0.22"/><circle cx="1406.9" cy="235.9" r="1.5" fill="#90a4d4" opacity="0.17"/><circle cx="934.1" cy="626.6" r="1" fill="#90a4d4" opacity="0.25"/><circle cx="1454.2" cy="444.7" r="1.5" fill="#90a4d4" opacity="0.15"/><circle cx="1186.2" cy="493.2" r="1" fill="#90a4d4" opacity="0.19"/><circle cx="871.5" cy="879.5" r="0.8" fill="#90a4d4" opacity="0.21"/><circle cx="1534.8" cy="372.9" r="1" fill="#90a4d4" opacity="0.19"/><circle cx="1450.9" cy="523.0" r="1.5" fill="#90a4d4" opacity="0.31"/><circle cx="1232.6" cy="455.4" r="1.2" fill="#90a4d4" opacity="0.28"/><circle cx="992.4" cy="746.9" r="1.5" fill="#90a4d4" opacity="0.26"/><circle cx="1430.2" cy="552.3" r="1.2" fill="#90a4d4" opacity="0.13"/><circle cx="1077.1" cy="802.7" r="1" fill="#90a4d4" opacity="0.20"/><circle cx="1144.0" cy="768.4" r="1.2" fill="#90a4d4" opacity="0.17"/><circle cx="1562.3" cy="541.2" r="1" fill="#90a4d4" opacity="0.34"/><circle cx="856.0" cy="743.5" r="0.8" fill="#90a4d4" opacity="0.09"/><circle cx="1136.9" cy="909.6" r="1.5" fill="#90a4d4" opacity="0.16"/><circle cx="1176.8" cy="600.5" r="1.5" fill="#90a4d4" opacity="0.22"/><circle cx="1319.2" cy="740.5" r="1.5" fill="#90a4d4" opacity="0.19"/><circle cx="1049.4" cy="714.5" r="0.8" fill="#90a4d4" opacity="0.26"/><circle cx="1171.0" cy="609.4" r="0.8" fill="#90a4d4" opacity="0.19"/><circle cx="1084.8" cy="568.6" r="1" fill="#90a4d4" opacity="0.32"/><circle cx="1322.4" cy="197.1" r="1.5" fill="#90a4d4" opacity="0.19"/><circle cx="1451.2" cy="543.2" r="0.8" fill="#90a4d4" opacity="0.13"/><circle cx="1024.1" cy="742.2" r="0.8" fill="#90a4d4" opacity="0.30"/><circle cx="1345.6" cy="767.8" r="1.2" fill="#90a4d4" opacity="0.30"/><circle cx="1609.1" cy="400.2" r="1.5" fill="#90a4d4" opacity="0.25"/><circle cx="1237.8" cy="665.5" r="1" fill="#90a4d4" opacity="0.19"/><circle cx="883.2" cy="941.8" r="0.8" fill="#90a4d4" opacity="0.18"/><circle cx="1480.0" cy="290.2" r="1.5" fill="#90a4d4" opacity="0.08"/><circle cx="882.8" cy="1011.6" r="0.8" fill="#90a4d4" opacity="0.33"/><circle cx="1150.7" cy="748.7" r="0.8" fill="#90a4d4" opacity="0.13"/><circle cx="1207.4" cy="672.7" r="1.2" fill="#90a4d4" opacity="0.32"/><circle cx="1390.3" cy="336.8" r="1" fill="#90a4d4" opacity="0.19"/><circle cx="968.7" cy="936.8" r="1" fill="#90a4d4" opacity="0.22"/><circle cx="1238.8" cy="684.2" r="1.5" fill="#90a4d4" opacity="0.30"/><circle cx="1273.9" cy="586.5" r="0.8" fill="#90a4d4" opacity="0.26"/><circle cx="1269.2" cy="495.3" r="1" fill="#90a4d4" opacity="0.18"/><circle cx="979.2" cy="887.0" r="1.2" fill="#90a4d4" opacity="0.25"/><circle cx="1444.5" cy="425.4" r="1" fill="#90a4d4" opacity="0.20"/><circle cx="1121.5" cy="739.4" r="0.8" fill="#90a4d4" opacity="0.14"/><circle cx="1139.8" cy="741.8" r="0.8" fill="#90a4d4" opacity="0.25"/><circle cx="1024.3" cy="826.3" r="0.8" fill="#90a4d4" opacity="0.12"/><circle cx="1256.6" cy="604.1" r="1.5" fill="#90a4d4" opacity="0.16"/><circle cx="1269.9" cy="596.0" r="1.5" fill="#90a4d4" opacity="0.34"/><circle cx="884.5" cy="933.9" r="1" fill="#90a4d4" opacity="0.19"/><circle cx="1025.2" cy="644.8" r="1.5" fill="#90a4d4" opacity="0.09"/><circle cx="1465.0" cy="431.3" r="1.5" fill="#90a4d4" opacity="0.13"/><circle cx="1509.9" cy="341.9" r="1.2" fill="#90a4d4" opacity="0.19"/><circle cx="1030.4" cy="692.6" r="1.2" fill="#90a4d4" opacity="0.19"/><circle cx="1010.1" cy="968.6" r="1" fill="#90a4d4" opacity="0.18"/><circle cx="1110.2" cy="630.8" r="1.2" fill="#90a4d4" opacity="0.14"/><circle cx="881.2" cy="971.0" r="1" fill="#90a4d4" opacity="0.15"/><circle cx="911.5" cy="879.8" r="1" fill="#90a4d4" opacity="0.15"/><circle cx="1464.7" cy="471.5" r="1" fill="#90a4d4" opacity="0.12"/><circle cx="1177.7" cy="825.3" r="1.5" fill="#90a4d4" opacity="0.18"/><circle cx="1529.2" cy="373.7" r="1" fill="#90a4d4" opacity="0.14"/><circle cx="1372.4" cy="862.8" r="1" fill="#90a4d4" opacity="0.33"/><circle cx="1423.6" cy="239.0" r="1.2" fill="#90a4d4" opacity="0.22"/><circle cx="1090.7" cy="691.6" r="1" fill="#90a4d4" opacity="0.11"/><circle cx="1334.2" cy="467.7" r="1.2" fill="#90a4d4" opacity="0.28"/><circle cx="1325.5" cy="443.4" r="0.8" fill="#90a4d4" opacity="0.26"/><circle cx="1209.2" cy="588.9" r="0.8" fill="#90a4d4" opacity="0.27"/><circle cx="1443.8" cy="526.4" r="1" fill="#90a4d4" opacity="0.17"/><circle cx="1382.0" cy="614.2" r="1.2" fill="#90a4d4" opacity="0.30"/><circle cx="1423.9" cy="531.6" r="1" fill="#90a4d4" opacity="0.10"/><circle cx="1093.3" cy="807.1" r="1.5" fill="#90a4d4" opacity="0.16"/><circle cx="1185.5" cy="770.1" r="1.5" fill="#90a4d4" opacity="0.29"/><circle cx="1458.7" cy="408.3" r="1.2" fill="#90a4d4" opacity="0.13"/><circle cx="1085.4" cy="733.2" r="1.2" fill="#90a4d4" opacity="0.32"/><circle cx="888.1" cy="988.4" r="1.5" fill="#90a4d4" opacity="0.18"/><circle cx="1186.9" cy="496.0" r="1" fill="#90a4d4" opacity="0.16"/><circle cx="1016.4" cy="793.5" r="0.8" fill="#90a4d4" opacity="0.19"/><circle cx="1227.5" cy="554.0" r="1.5" fill="#90a4d4" opacity="0.13"/><circle cx="1064.3" cy="793.4" r="1.2" fill="#90a4d4" opacity="0.25"/><circle cx="1481.3" cy="355.0" r="1" fill="#90a4d4" opacity="0.23"/><circle cx="1327.3" cy="503.7" r="1.2" fill="#90a4d4" opacity="0.33"/><circle cx="1057.6" cy="1021.3" r="1.2" fill="#90a4d4" opacity="0.32"/><circle cx="1312.6" cy="298.2" r="1" fill="#90a4d4" opacity="0.26"/><circle cx="855.7" cy="947.4" r="1.2" fill="#90a4d4" opacity="0.14"/><circle cx="1448.6" cy="361.3" r="1.5" fill="#90a4d4" opacity="0.35"/><circle cx="1233.2" cy="550.4" r="1" fill="#90a4d4" opacity="0.16"/><circle cx="1428.7" cy="325.9" r="1.5" fill="#90a4d4" opacity="0.22"/><circle cx="1340.5" cy="563.4" r="1" fill="#90a4d4" opacity="0.21"/><circle cx="1135.4" cy="990.5" r="1.2" fill="#90a4d4" opacity="0.13"/><circle cx="1010.2" cy="919.3" r="1.2" fill="#90a4d4" opacity="0.15"/><circle cx="874.6" cy="935.8" r="1.2" fill="#90a4d4" opacity="0.17"/><circle cx="925.4" cy="936.8" r="1.5" fill="#90a4d4" opacity="0.26"/><circle cx="1007.9" cy="826.9" r="1" fill="#90a4d4" opacity="0.08"/><circle cx="1396.2" cy="590.7" r="1.2" fill="#90a4d4" opacity="0.12"/><circle cx="1414.6" cy="586.0" r="1" fill="#90a4d4" opacity="0.17"/><circle cx="1252.6" cy="321.9" r="1" fill="#90a4d4" opacity="0.26"/><circle cx="950.1" cy="881.0" r="1.5" fill="#90a4d4" opacity="0.31"/><circle cx="1178.8" cy="761.3" r="0.8" fill="#90a4d4" opacity="0.18"/><circle cx="1148.7" cy="980.4" r="0.8" fill="#90a4d4" opacity="0.32"/><circle cx="1138.3" cy="852.9" r="0.8" fill="#90a4d4" opacity="0.12"/><circle cx="1213.7" cy="742.2" r="1.2" fill="#90a4d4" opacity="0.16"/><circle cx="1325.9" cy="696.7" r="1.5" fill="#90a4d4" opacity="0.10"/><circle cx="1357.2" cy="527.5" r="1.2" fill="#90a4d4" opacity="0.11"/><circle cx="1143.0" cy="630.9" r="1.2" fill="#90a4d4" opacity="0.08"/><circle cx="1473.8" cy="375.8" r="1.2" fill="#90a4d4" opacity="0.25"/><circle cx="1424.1" cy="316.0" r="1" fill="#90a4d4" opacity="0.10"/><circle cx="1295.7" cy="440.2" r="0.8" fill="#90a4d4" opacity="0.29"/><circle cx="1388.2" cy="403.4" r="1" fill="#90a4d4" opacity="0.11"/><circle cx="1383.3" cy="546.8" r="1.2" fill="#90a4d4" opacity="0.28"/><circle cx="1159.3" cy="842.3" r="1.2" fill="#90a4d4" opacity="0.14"/><circle cx="1485.8" cy="385.4" r="0.8" fill="#90a4d4" opacity="0.09"/><circle cx="1185.0" cy="570.1" r="1.5" fill="#90a4d4" opacity="0.32"/><circle cx="1367.4" cy="257.7" r="1" fill="#90a4d4" opacity="0.35"/><circle cx="1265.1" cy="592.0" r="0.8" fill="#90a4d4" opacity="0.12"/><circle cx="1114.3" cy="926.6" r="1.5" fill="#90a4d4" opacity="0.10"/><circle cx="1213.0" cy="748.5" r="0.8" fill="#90a4d4" opacity="0.09"/><circle cx="1392.9" cy="686.6" r="1.5" fill="#90a4d4" opacity="0.12"/><circle cx="1479.8" cy="416.0" r="0.8" fill="#90a4d4" opacity="0.20"/><circle cx="1384.0" cy="611.8" r="1" fill="#90a4d4" opacity="0.18"/><circle cx="739.7" cy="892.7" r="1.2" fill="#90a4d4" opacity="0.23"/><circle cx="1082.8" cy="606.2" r="1.5" fill="#90a4d4" opacity="0.34"/><circle cx="1418.1" cy="343.5" r="1" fill="#90a4d4" opacity="0.34"/><circle cx="1364.3" cy="234.6" r="0.8" fill="#90a4d4" opacity="0.28"/><circle cx="993.2" cy="700.4" r="1.2" fill="#90a4d4" opacity="0.23"/><circle cx="1068.7" cy="652.8" r="1" fill="#90a4d4" opacity="0.16"/><circle cx="1197.0" cy="852.8" r="0.8" fill="#90a4d4" opacity="0.31"/><circle cx="1025.1" cy="859.7" r="1" fill="#90a4d4" opacity="0.26"/><circle cx="993.6" cy="651.4" r="1.5" fill="#90a4d4" opacity="0.18"/><circle cx="982.7" cy="803.3" r="1" fill="#90a4d4" opacity="0.13"/><circle cx="1457.7" cy="398.7" r="0.8" fill="#90a4d4" opacity="0.14"/><circle cx="1370.2" cy="391.4" r="1.2" fill="#90a4d4" opacity="0.27"/><circle cx="992.1" cy="827.2" r="1.5" fill="#90a4d4" opacity="0.14"/><circle cx="1320.7" cy="674.0" r="0.8" fill="#90a4d4" opacity="0.31"/><circle cx="1374.0" cy="587.2" r="1.5" fill="#90a4d4" opacity="0.12"/><circle cx="1040.3" cy="529.5" r="0.8" fill="#90a4d4" opacity="0.25"/><circle cx="1468.9" cy="321.9" r="0.8" fill="#90a4d4" opacity="0.20"/><circle cx="1097.9" cy="353.5" r="1" fill="#90a4d4" opacity="0.23"/><circle cx="1303.9" cy="413.3" r="1" fill="#90a4d4" opacity="0.18"/><circle cx="1249.5" cy="559.5" r="0.8" fill="#90a4d4" opacity="0.08"/><circle cx="1271.5" cy="607.3" r="1" fill="#90a4d4" opacity="0.20"/><circle cx="1505.7" cy="317.6" r="1.2" fill="#90a4d4" opacity="0.13"/><circle cx="1387.2" cy="517.5" r="1.2" fill="#90a4d4" opacity="0.30"/><circle cx="1406.5" cy="544.8" r="1" fill="#90a4d4" opacity="0.18"/><circle cx="1347.1" cy="494.7" r="1.2" fill="#90a4d4" opacity="0.27"/><circle cx="895.3" cy="972.0" r="1.2" fill="#90a4d4" opacity="0.30"/><circle cx="944.2" cy="927.3" r="1" fill="#90a4d4" opacity="0.15"/><circle cx="863.2" cy="763.1" r="1.5" fill="#90a4d4" opacity="0.11"/><circle cx="983.2" cy="962.3" r="1.2" fill="#90a4d4" opacity="0.32"/><circle cx="1250.2" cy="498.1" r="1" fill="#90a4d4" opacity="0.24"/><circle cx="1193.5" cy="963.6" r="1.2" fill="#90a4d4" opacity="0.34"/><circle cx="905.8" cy="1016.9" r="1.2" fill="#90a4d4" opacity="0.35"/><circle cx="1170.9" cy="655.9" r="0.8" fill="#90a4d4" opacity="0.10"/><circle cx="1274.4" cy="577.9" r="1.5" fill="#90a4d4" opacity="0.31"/><circle cx="1448.1" cy="296.2" r="1" fill="#90a4d4" opacity="0.32"/><circle cx="1180.0" cy="512.3" r="0.8" fill="#90a4d4" opacity="0.18"/><circle cx="1200.1" cy="629.6" r="0.8" fill="#90a4d4" opacity="0.14"/><circle cx="1433.1" cy="465.0" r="1.5" fill="#90a4d4" opacity="0.17"/><circle cx="1249.0" cy="742.7" r="1.2" fill="#90a4d4" opacity="0.24"/><circle cx="1072.1" cy="762.3" r="0.8" fill="#90a4d4" opacity="0.15"/><circle cx="1333.0" cy="313.4" r="1" fill="#90a4d4" opacity="0.15"/><circle cx="988.6" cy="767.7" r="1.2" fill="#90a4d4" opacity="0.18"/><circle cx="1204.1" cy="577.6" r="0.8" fill="#90a4d4" opacity="0.33"/><circle cx="1418.1" cy="350.9" r="0.8" fill="#90a4d4" opacity="0.32"/><circle cx="1284.0" cy="397.9" r="1.2" fill="#90a4d4" opacity="0.29"/><circle cx="1286.6" cy="377.1" r="1" fill="#90a4d4" opacity="0.32"/><circle cx="1433.0" cy="319.1" r="1.2" fill="#90a4d4" opacity="0.28"/><circle cx="1139.8" cy="603.9" r="1" fill="#90a4d4" opacity="0.17"/><circle cx="1205.6" cy="606.6" r="1.2" fill="#90a4d4" opacity="0.26"/><circle cx="1446.9" cy="397.6" r="1.5" fill="#90a4d4" opacity="0.22"/><circle cx="1540.4" cy="461.3" r="1" fill="#90a4d4" opacity="0.12"/><circle cx="638.1" cy="805.9" r="1.5" fill="#90a4d4" opacity="0.19"/><circle cx="1164.9" cy="762.2" r="0.8" fill="#90a4d4" opacity="0.12"/><circle cx="1138.8" cy="345.5" r="1.2" fill="#90a4d4" opacity="0.28"/><circle cx="1302.1" cy="685.0" r="1" fill="#90a4d4" opacity="0.24"/><circle cx="918.4" cy="946.4" r="1" fill="#90a4d4" opacity="0.16"/><circle cx="891.8" cy="590.7" r="1.5" fill="#90a4d4" opacity="0.27"/><circle cx="1498.3" cy="392.9" r="1.5" fill="#90a4d4" opacity="0.17"/><circle cx="1090.4" cy="970.8" r="1" fill="#90a4d4" opacity="0.25"/><circle cx="978.3" cy="803.8" r="0.8" fill="#90a4d4" opacity="0.14"/><circle cx="1175.1" cy="766.2" r="0.8" fill="#90a4d4" opacity="0.13"/><circle cx="1449.9" cy="582.9" r="1" fill="#90a4d4" opacity="0.24"/><circle cx="1010.7" cy="1022.7" r="1.2" fill="#90a4d4" opacity="0.27"/><circle cx="742.1" cy="893.6" r="1.2" fill="#90a4d4" opacity="0.22"/><circle cx="1302.9" cy="289.8" r="1" fill="#90a4d4" opacity="0.17"/><circle cx="1273.0" cy="274.7" r="0.8" fill="#90a4d4" opacity="0.26"/><circle cx="1110.0" cy="706.0" r="0.8" fill="#90a4d4" opacity="0.31"/><circle cx="1308.4" cy="391.0" r="0.8" fill="#90a4d4" opacity="0.25"/><circle cx="986.5" cy="691.3" r="1.2" fill="#90a4d4" opacity="0.33"/><circle cx="1428.0" cy="394.8" r="0.8" fill="#90a4d4" opacity="0.33"/><circle cx="1267.2" cy="640.6" r="1.2" fill="#90a4d4" opacity="0.12"/><circle cx="908.9" cy="1013.6" r="1" fill="#90a4d4" opacity="0.12"/><circle cx="1491.6" cy="576.3" r="1.5" fill="#90a4d4" opacity="0.17"/><circle cx="1391.2" cy="600.5" r="1" fill="#90a4d4" opacity="0.26"/><circle cx="1193.2" cy="534.4" r="1.2" fill="#90a4d4" opacity="0.30"/><circle cx="1308.2" cy="779.9" r="0.8" fill="#90a4d4" opacity="0.29"/><circle cx="1118.6" cy="830.3" r="1.5" fill="#90a4d4" opacity="0.23"/><circle cx="886.0" cy="576.4" r="1.2" fill="#90a4d4" opacity="0.12"/><circle cx="783.2" cy="922.4" r="1.2" fill="#90a4d4" opacity="0.12"/><circle cx="1296.1" cy="585.2" r="1.5" fill="#90a4d4" opacity="0.28"/><circle cx="998.7" cy="1000.0" r="0.8" fill="#90a4d4" opacity="0.23"/><circle cx="1030.9" cy="885.9" r="1" fill="#90a4d4" opacity="0.15"/><circle cx="1249.4" cy="574.9" r="1" fill="#90a4d4" opacity="0.22"/><circle cx="928.1" cy="623.7" r="1" fill="#90a4d4" opacity="0.20"/><circle cx="1458.8" cy="436.4" r="1.5" fill="#90a4d4" opacity="0.20"/><circle cx="1276.2" cy="941.4" r="0.8" fill="#90a4d4" opacity="0.11"/><circle cx="1451.8" cy="585.1" r="1.5" fill="#90a4d4" opacity="0.26"/><circle cx="1159.2" cy="812.9" r="1" fill="#90a4d4" opacity="0.23"/><circle cx="1324.2" cy="875.6" r="1" fill="#90a4d4" opacity="0.09"/><circle cx="813.2" cy="932.6" r="1.5" fill="#90a4d4" opacity="0.15"/><circle cx="1071.6" cy="736.8" r="1.2" fill="#90a4d4" opacity="0.16"/><circle cx="1575.8" cy="368.0" r="1" fill="#90a4d4" opacity="0.34"/><circle cx="1179.1" cy="291.8" r="1.2" fill="#90a4d4" opacity="0.34"/><circle cx="1009.9" cy="952.2" r="1.2" fill="#90a4d4" opacity="0.16"/><circle cx="921.3" cy="641.7" r="1" fill="#90a4d4" opacity="0.17"/><circle cx="1282.3" cy="596.7" r="1.5" fill="#90a4d4" opacity="0.14"/><circle cx="964.5" cy="1018.1" r="1.2" fill="#90a4d4" opacity="0.09"/><circle cx="1202.4" cy="331.5" r="1.5" fill="#90a4d4" opacity="0.13"/><circle cx="1489.5" cy="456.5" r="0.8" fill="#90a4d4" opacity="0.30"/><circle cx="988.8" cy="916.2" r="0.8" fill="#90a4d4" opacity="0.12"/><circle cx="1002.8" cy="743.5" r="1" fill="#90a4d4" opacity="0.21"/><circle cx="1137.0" cy="738.0" r="1.5" fill="#90a4d4" opacity="0.17"/></g>
</svg>
</div>
<div class="a" style="left:420px;top:572px;width:248.4px;height:5px;background:#fbb917"></div>
<div class="t" style="left:702.62px;top:455.24px;font-size:77.91px;color:#fbb917;-webkit-text-stroke:3.80px #fbb917;letter-spacing:12.828px;transform:scaleX(0.8400);transform-origin:0 0;">SEVEN CONTINENTS OF THE</div>
<div class="t" style="left:705.31px;top:552.84px;font-size:77.91px;color:#fbb917;-webkit-text-stroke:3.80px #fbb917;letter-spacing:17.691px;transform:scaleX(0.8400);transform-origin:0 0;">WORLD</div>
<div class="a" style="left:739.5px;top:690.0px;width:15.5px;height:7px;background:#fbb917"></div>
<div class="t" style="left:800.24px;top:665.88px;font-size:47.38px;color:#fff;-webkit-text-stroke:2.80px #fff;letter-spacing:2.267px;transform:scaleX(0.9500);transform-origin:0 0;">Asia</div>
<div class="a" style="left:739.5px;top:791.5px;width:15.5px;height:7px;background:#fbb917"></div>
<div class="t" style="left:800.24px;top:767.38px;font-size:47.38px;color:#fff;-webkit-text-stroke:2.80px #fff;letter-spacing:5.129px;transform:scaleX(0.9500);transform-origin:0 0;">Africa</div>
<div class="a" style="left:739.5px;top:893.0px;width:15.5px;height:7px;background:#fbb917"></div>
<div class="t" style="left:796.64px;top:868.88px;font-size:47.38px;color:#fff;-webkit-text-stroke:2.80px #fff;letter-spacing:6.488px;transform:scaleX(0.9500);transform-origin:0 0;">North America</div>
<div class="a" style="left:739.5px;top:994.5px;width:15.5px;height:7px;background:#fbb917"></div>
<div class="t" style="left:798.29px;top:970.38px;font-size:47.38px;color:#fff;-webkit-text-stroke:2.80px #fff;letter-spacing:5.934px;transform:scaleX(0.9500);transform-origin:0 0;">South America</div>
<div class="a" style="left:739.5px;top:1096.0px;width:15.5px;height:7px;background:#fbb917"></div>
<div class="t" style="left:800.24px;top:1071.88px;font-size:47.38px;color:#fff;-webkit-text-stroke:2.80px #fff;letter-spacing:6.232px;transform:scaleX(0.9500);transform-origin:0 0;">Antarctica</div>
<div class="a" style="left:739.5px;top:1197.5px;width:15.5px;height:7px;background:#fbb917"></div>
<div class="t" style="left:796.64px;top:1173.38px;font-size:47.38px;color:#fff;-webkit-text-stroke:2.80px #fff;letter-spacing:6.859px;transform:scaleX(0.9500);transform-origin:0 0;">Europe</div>
<div class="a" style="left:739.5px;top:1299.0px;width:15.5px;height:7px;background:#fbb917"></div>
<div class="t" style="left:800.24px;top:1274.88px;font-size:47.38px;color:#fff;-webkit-text-stroke:2.80px #fff;letter-spacing:4.973px;transform:scaleX(0.9500);transform-origin:0 0;">Australia</div>
<svg style="left:681.5px;top:422px;" width="1462.5" height="228.7" viewBox="0 0 1462.5 228.7"><rect x="0" y="0" width="1462.5" height="228.7" fill="none" stroke="#9096a3" stroke-width="2" stroke-dasharray="7 4"/></svg>
<div class="a" style="left:1411px;top:385px;width:1.5px;height:30px;background:#555"></div>
<svg style="left:1403.6px;top:369.5px;" width="16" height="16" viewBox="0 0 16 16"><circle cx="8" cy="8" r="8" fill="#b6e06a"/></svg>
<svg style="left:671.5px;top:412px;" width="20" height="20" viewBox="0 0 20 20"><circle cx="10" cy="10" r="8.8" fill="#1a8cff" stroke="#fff" stroke-width="2.2"/></svg>
<svg style="left:671.5px;top:640.7px;" width="20" height="20" viewBox="0 0 20 20"><circle cx="10" cy="10" r="8.8" fill="#1a8cff" stroke="#fff" stroke-width="2.2"/></svg>
<svg style="left:2134px;top:412px;" width="20" height="20" viewBox="0 0 20 20"><circle cx="10" cy="10" r="8.8" fill="#1a8cff" stroke="#fff" stroke-width="2.2"/></svg>
<svg style="left:2134px;top:640.7px;" width="20" height="20" viewBox="0 0 20 20"><circle cx="10" cy="10" r="8.8" fill="#1a8cff" stroke="#fff" stroke-width="2.2"/></svg>
<svg style="left:1402px;top:412px;" width="20" height="20" viewBox="0 0 20 20"><rect x="1.1" y="1.1" width="17.8" height="17.8" fill="#1a8cff" stroke="#fff" stroke-width="2.2"/></svg>
<svg style="left:1402px;top:640.7px;" width="20" height="20" viewBox="0 0 20 20"><rect x="1.1" y="1.1" width="17.8" height="17.8" fill="#1a8cff" stroke="#fff" stroke-width="2.2"/></svg>
<svg style="left:671.5px;top:526.3px;" width="20" height="20" viewBox="0 0 20 20"><rect x="1.1" y="1.1" width="17.8" height="17.8" fill="#1a8cff" stroke="#fff" stroke-width="2.2"/></svg>
<svg style="left:2134px;top:526.3px;" width="20" height="20" viewBox="0 0 20 20"><rect x="1.1" y="1.1" width="17.8" height="17.8" fill="#1a8cff" stroke="#fff" stroke-width="2.2"/></svg>
<div class="a" style="left:2px;top:538px;width:348px;height:179.5px;background:#d4d4d4"></div>
<div class="a" style="left:66px;top:197px;width:240px;height:137px;overflow:hidden;box-shadow:0 0 2px 1px rgba(0,0,0,.18)">
<div class="a" style="left:0;top:0;width:240px;height:137px;border:2px solid #fff;background:radial-gradient(ellipse 45% 9% at 50% 81%, rgba(130,170,210,.55), rgba(80,130,200,.25) 50%, rgba(0,0,0,0) 100%),radial-gradient(ellipse 55% 50% at 50% 80%, rgba(40,70,150,.55), rgba(30,55,130,.2) 60%, rgba(0,0,0,0) 100%),linear-gradient(#02051a,#060b24 45%,#0b1436 70%,#15224e 82%,#161f48 92%,#0c1330);"></div>
</div>
<div class="t" style="left:35.23px;top:198.31px;font-size:23.26px;color:#555;">1</div>
<div class="a" style="left:66px;top:378px;width:240px;height:137px;overflow:hidden;box-shadow:0 0 2px 1px rgba(0,0,0,.18)">
<div class="a" style="left:0;top:0;width:240px;height:137px;border:2px solid #fff;background:radial-gradient(ellipse 50% 60% at 45% 100%, rgba(40,62,120,.25), rgba(40,62,120,0)),radial-gradient(ellipse 40% 70% at 100% 10%, rgba(6,12,36,.6), rgba(6,12,36,0)),#14214c;"></div>
</div>
<div class="t" style="left:34.53px;top:379.31px;font-size:23.26px;color:#555;">2</div>
<div class="a" style="left:66px;top:559px;width:240px;height:137px;overflow:hidden;box-shadow:0 0 2px 1px rgba(0,0,0,.18)">
<div class="a" style="left:0;top:0;width:240px;height:137px;border:2px solid #fff;background:radial-gradient(ellipse 50% 60% at 45% 100%, rgba(40,62,120,.25), rgba(40,62,120,0)),radial-gradient(ellipse 40% 70% at 100% 10%, rgba(6,12,36,.6), rgba(6,12,36,0)),#14214c;"></div>
</div>
<div class="t" style="left:35.17px;top:560.31px;font-size:23.26px;color:#333;font-weight:700;">3</div>
<div class="a" style="left:66px;top:740px;width:240px;height:137px;overflow:hidden;box-shadow:0 0 2px 1px rgba(0,0,0,.18)">
<div class="a" style="left:0;top:0;width:240px;height:137px;border:2px solid #fff;background:radial-gradient(ellipse 50% 60% at 45% 100%, rgba(40,62,120,.25), rgba(40,62,120,0)),radial-gradient(ellipse 40% 70% at 100% 10%, rgba(6,12,36,.6), rgba(6,12,36,0)),#14214c;"></div>
</div>
<div class="t" style="left:35.17px;top:741.31px;font-size:23.26px;color:#555;">4</div>
<div class="a" style="left:66px;top:921px;width:240px;height:137px;overflow:hidden;box-shadow:0 0 2px 1px rgba(0,0,0,.18)">
<div class="a" style="left:0;top:0;width:240px;height:137px;border:2px solid #fff;background:radial-gradient(ellipse 50% 60% at 45% 100%, rgba(40,62,120,.25), rgba(40,62,120,0)),radial-gradient(ellipse 40% 70% at 100% 10%, rgba(6,12,36,.6), rgba(6,12,36,0)),#14214c;"></div>
</div>
<div class="t" style="left:34.77px;top:922.31px;font-size:23.26px;color:#555;">5</div>
<div class="a" style="left:66px;top:1102px;width:240px;height:137px;overflow:hidden;box-shadow:0 0 2px 1px rgba(0,0,0,.18)">
<div class="a" style="left:0;top:0;width:240px;height:137px;border:2px solid #fff;background:radial-gradient(ellipse 50% 60% at 45% 100%, rgba(40,62,120,.25), rgba(40,62,120,0)),radial-gradient(ellipse 40% 70% at 100% 10%, rgba(6,12,36,.6), rgba(6,12,36,0)),#14214c;"></div>
</div>
<div class="t" style="left:34.52px;top:1103.31px;font-size:23.26px;color:#555;">6</div>
<div class="a" style="left:66px;top:1283px;width:240px;height:137px;overflow:hidden;box-shadow:0 0 2px 1px rgba(0,0,0,.18)">
<div class="a" style="left:0;top:0;width:240px;height:137px;border:2px solid #fff;background:radial-gradient(ellipse 50% 60% at 45% 100%, rgba(40,62,120,.25), rgba(40,62,120,0)),radial-gradient(ellipse 40% 70% at 100% 10%, rgba(6,12,36,.6), rgba(6,12,36,0)),#14214c;"></div>
</div>
<div class="t" style="left:34.51px;top:1284.31px;font-size:23.26px;color:#555;">7</div>
<div class="a" style="left:66px;top:1464px;width:240px;height:123px;overflow:hidden;box-shadow:0 0 2px 1px rgba(0,0,0,.18)">
<div class="a" style="left:0;top:0;width:240px;height:137px;border:2px solid #fff;background:radial-gradient(ellipse 50% 60% at 45% 100%, rgba(40,62,120,.25), rgba(40,62,120,0)),radial-gradient(ellipse 40% 70% at 100% 10%, rgba(6,12,36,.6), rgba(6,12,36,0)),#14214c;"></div>
</div>
<div class="t" style="left:34.69px;top:1465.31px;font-size:23.26px;color:#555;">8</div>
<svg style="left:68px;top:292px;" width="236" height="40" viewBox="0 0 236 40"><defs><linearGradient id="hz" x1="0" x2="1"><stop offset="0" stop-color="#4a78c0" stop-opacity="0"/><stop offset=".3" stop-color="#5e8cc8" stop-opacity=".7"/><stop offset=".5" stop-color="#9cbad0" stop-opacity=".95"/><stop offset=".7" stop-color="#5e8cc8" stop-opacity=".7"/><stop offset="1" stop-color="#4a78c0" stop-opacity="0"/></linearGradient><filter id="hzb" x="-10%" y="-100%" width="120%" height="300%"><feGaussianBlur stdDeviation="1.3"/></filter></defs><path d="M0 25 Q118 5 236 25" fill="none" stroke="url(#hz)" stroke-width="3" filter="url(#hzb)"/><path d="M0 26 Q118 6 236 26 L236 40 L0 40 Z" fill="#0e1638" opacity=".55"/></svg>
<div class="t" style="left:144.02px;top:258.46px;font-size:15.99px;color:#fbb917;font-weight:700;letter-spacing:0.838px;font-family:'Liberation Serif',serif;">Continents</div>
<div class="a" style="left:78.7px;top:272.3px;width:33px;height:1.1px;background:#fbb917"></div>
<div class="a" style="left:70px;top:409.5px;width:31.5px;height:1.2px;background:#fbb917"></div>
<div class="t" style="left:104.39px;top:402.58px;font-size:13.37px;color:#fbb917;font-weight:700;transform:scaleX(0.9195);transform-origin:0 0;">What are continents?</div>
<div class="a" style="left:112.5px;top:437px;width:2.5px;height:1px;background:#fbb917"></div>
<div class="t" style="left:119.44px;top:434.39px;font-size:6.40px;color:#fff;font-weight:700;letter-spacing:-0.127px;">Continents are very large landmasses separated by</div>
<div class="t" style="left:119.45px;top:442.39px;font-size:6.40px;color:#fff;font-weight:700;letter-spacing:-0.090px;">expanses of water.</div>
<div class="a" style="left:112.5px;top:452.5px;width:2.5px;height:1px;background:#fbb917"></div>
<div class="t" style="left:119.63px;top:451.79px;font-size:6.40px;color:#fff;font-weight:700;letter-spacing:-0.188px;">The earth has seven such continents.</div>
<div class="a" style="left:70px;top:589.5px;width:31px;height:1.3px;background:#fbb917"></div>
<div class="t" style="left:105.09px;top:574.23px;font-size:11.77px;color:#fbb917;font-weight:700;transform:scaleX(0.9090);transform-origin:0 0;">SEVEN CONTINENTS OF THE</div>
<div class="t" style="left:105.39px;top:586.03px;font-size:11.77px;color:#fbb917;font-weight:700;transform:scaleX(0.9099);transform-origin:0 0;">WORLD</div>
<div class="a" style="left:110.7px;top:604.5px;width:2.5px;height:1px;background:#fbb917"></div>
<div class="t" style="left:117.85px;top:601.09px;font-size:6.98px;color:#fff;font-weight:700;transform:scaleX(0.8900);transform-origin:0 0;">Asia</div>
<div class="a" style="left:110.7px;top:617.6px;width:2.5px;height:1px;background:#fbb917"></div>
<div class="t" style="left:117.83px;top:614.19px;font-size:6.98px;color:#fff;font-weight:700;letter-spacing:-0.129px;">Africa</div>
<div class="a" style="left:110.7px;top:630.7px;width:2.5px;height:1px;background:#fbb917"></div>
<div class="t" style="left:117.53px;top:627.29px;font-size:6.98px;color:#fff;font-weight:700;letter-spacing:0.029px;">North America</div>
<div class="a" style="left:110.7px;top:643.8px;width:2.5px;height:1px;background:#fbb917"></div>
<div class="t" style="left:117.80px;top:640.39px;font-size:6.98px;color:#fff;font-weight:700;letter-spacing:-0.048px;">South America</div>
<div class="a" style="left:110.7px;top:656.9px;width:2.5px;height:1px;background:#fbb917"></div>
<div class="t" style="left:117.83px;top:653.49px;font-size:6.98px;color:#fff;font-weight:700;">Antarctica</div>
<div class="a" style="left:110.7px;top:670.0px;width:2.5px;height:1px;background:#fbb917"></div>
<div class="t" style="left:117.53px;top:666.59px;font-size:6.98px;color:#fff;font-weight:700;letter-spacing:0.034px;">Europe</div>
<div class="a" style="left:110.7px;top:683.1px;width:2.5px;height:1px;background:#fbb917"></div>
<div class="t" style="left:117.83px;top:679.69px;font-size:6.98px;color:#fff;font-weight:700;letter-spacing:-0.153px;">Australia</div>
<div class="a" style="left:71.8px;top:772px;width:30px;height:1.2px;background:#fbb917"></div>
<div class="t" style="left:108.11px;top:763.28px;font-size:13.37px;color:#fbb917;font-weight:700;transform:scaleX(0.8572);transform-origin:0 0;">Asia</div>
<div class="t" style="left:117.03px;top:787.14px;font-size:6.69px;color:#fff;font-weight:700;letter-spacing:0.288px;">Asia is in the northern hemisphere.</div>
<div class="t" style="left:116.75px;top:802.84px;font-size:6.69px;color:#fff;font-weight:700;letter-spacing:0.063px;">It is world's largest and most populous</div>
<div class="t" style="left:117.02px;top:809.94px;font-size:6.69px;color:#fff;font-weight:700;transform:scaleX(0.7047);transform-origin:0 0;">continent.</div>
<div class="t" style="left:116.93px;top:825.04px;font-size:6.69px;color:#fff;font-weight:700;">China is one of the biggest countries in Asia.</div>
<div class="t" style="left:116.75px;top:838.14px;font-size:6.69px;color:#fff;font-weight:700;letter-spacing:0.073px;">It's surrounded by three oceans: Arctic,</div>
<div class="t" style="left:116.88px;top:845.94px;font-size:6.69px;color:#fff;font-weight:700;transform:scaleX(0.7125);transform-origin:0 0;">Indian, and Pacific.</div>
<div class="a" style="left:109px;top:790.0px;width:2.5px;height:2px;background:#c98a3a;border-radius:1px"></div>
<div class="a" style="left:109px;top:805.7px;width:2.5px;height:2px;background:#c98a3a;border-radius:1px"></div>
<div class="a" style="left:109px;top:827.9000000000001px;width:2.5px;height:2px;background:#c98a3a;border-radius:1px"></div>
<div class="a" style="left:109px;top:841.0px;width:2.5px;height:2px;background:#c98a3a;border-radius:1px"></div>
<div class="a" style="left:70.9px;top:951.8px;width:31.3px;height:1.2px;background:#fbb917"></div>
<div class="t" style="left:106.70px;top:943.32px;font-size:13.08px;color:#fbb917;font-weight:700;transform:scaleX(0.9230);transform-origin:0 0;">Africa</div>
<div class="t" style="left:106.99px;top:964.22px;font-size:6.83px;color:#fff;letter-spacing:0.188px;">Africa  is in both hemispheres.</div>
<div class="t" style="left:106.54px;top:992.22px;font-size:6.83px;color:#fff;font-weight:700;letter-spacing:-0.031px;">It is second-largest and also second most populated</div>
<div class="t" style="left:106.73px;top:1000.22px;font-size:6.83px;color:#fff;font-weight:700;letter-spacing:-0.016px;">continent in the world, after Asia.</div>
<div class="t" style="left:106.54px;top:1024.22px;font-size:6.83px;color:#fff;font-weight:700;letter-spacing:-0.051px;">It's surrounded by: Mediterranean sea, Red sea, Indian</div>
<div class="t" style="left:106.73px;top:1032.22px;font-size:6.83px;color:#fff;font-weight:700;letter-spacing:-0.025px;">ocean, and Atlantic ocean.</div>
<div class="a" style="left:71.4px;top:1131.5px;width:31.6px;height:1.2px;background:#fbb917"></div>
<div class="t" style="left:96.87px;top:1151.00px;font-size:9.45px;color:#fff;font-weight:700;letter-spacing:0.063px;">North America covers an area of about</div>
<div class="t" style="left:149.37px;top:1166.70px;font-size:9.45px;color:#fff;font-weight:700;letter-spacing:0.756px;">24,709,00 km²</div>
<div class="a" style="left:71.9px;top:1314px;width:31.8px;height:1.2px;background:#fbb917"></div>
<div class="t" style="left:107.97px;top:1303.59px;font-size:10.17px;color:#fbb917;font-weight:700;transform:scaleX(0.9298);transform-origin:0 0;">North America is surrounded by four</div>
<div class="t" style="left:108.63px;top:1314.09px;font-size:10.17px;color:#fbb917;font-weight:700;letter-spacing:-0.219px;">water bodies:</div>
<div class="a" style="left:108.2px;top:1339.8px;width:2.2px;height:2.2px;background:#e8a830;border-radius:50%"></div>
<div class="t" style="left:116.83px;top:1335.86px;font-size:8.43px;color:#fff;font-weight:700;transform:scaleX(0.8141);transform-origin:0 0;">Arctic ocean</div>
<div class="a" style="left:108.2px;top:1355.8px;width:2.2px;height:2.2px;background:#e8a830;border-radius:50%"></div>
<div class="t" style="left:117.36px;top:1351.86px;font-size:8.43px;color:#fff;font-style:italic;transform:scaleX(0.8775);transform-origin:0 0;">Atlantic ocean</div>
<div class="a" style="left:108.2px;top:1371.8px;width:2.2px;height:2.2px;background:#e8a830;border-radius:50%"></div>
<div class="t" style="left:116.39px;top:1367.86px;font-size:8.43px;color:#fff;transform:scaleX(0.8752);transform-origin:0 0;">Pacific ocean</div>
<div class="a" style="left:117px;top:1376.5px;width:42.8px;height:0.8px;background:#fff"></div>
<div class="a" style="left:108.2px;top:1385.5px;width:2.2px;height:2.2px;background:#e8a830;border-radius:50%"></div>
<div class="t" style="left:116.71px;top:1381.56px;font-size:8.43px;color:#fff;font-weight:700;transform:scaleX(0.8357);transform-origin:0 0;">Caribbean Sea</div>
<div class="a" style="left:117px;top:1390.2px;width:48.7px;height:0.8px;background:#fff"></div>
<div class="a" style="left:108.2px;top:1402.6px;width:2.2px;height:2.2px;background:#e8a830;border-radius:50%"></div>
<div class="t" style="left:116.31px;top:1398.66px;font-size:8.43px;color:#fff;transform:scaleX(0.8881);transform-origin:0 0;">Indian ocean</div>
<div class="a" style="left:69.7px;top:1493.7px;width:31.3px;height:1.2px;background:#fbb917"></div>
<div class="t" style="left:105.20px;top:1487.14px;font-size:10.47px;color:#fbb917;font-weight:700;letter-spacing:0.212px;">Seven continents of the world</div>
<div class="a" style="left:110px;top:1510.85px;width:2.5px;height:1px;background:#fbb917"></div>
<div class="t" style="left:117.78px;top:1506.02px;font-size:10.61px;color:#fff;font-weight:700;transform:scaleX(0.8237);transform-origin:0 0;">Asia</div>
<div class="a" style="left:110px;top:1527.0px;width:2.5px;height:1px;background:#fbb917"></div>
<div class="t" style="left:117.80px;top:1522.39px;font-size:10.17px;color:#fff;font-weight:700;transform:scaleX(0.8028);transform-origin:0 0;">Africa</div>
<div class="a" style="left:110px;top:1541.3px;width:2.5px;height:1px;background:#fbb917"></div>
<div class="t" style="left:117.51px;top:1538.15px;font-size:7.27px;color:#fff;font-weight:700;letter-spacing:-0.220px;">North America</div>
<div class="a" style="left:110px;top:1554.5px;width:2.5px;height:1px;background:#fbb917"></div>
<div class="t" style="left:117.82px;top:1551.64px;font-size:6.69px;color:#fff;font-weight:700;transform:scaleX(0.9142);transform-origin:0 0;">South America</div>
<div class="a" style="left:110px;top:1565.75px;width:2.5px;height:1px;background:#fbb917"></div>
<div class="t" style="left:117.86px;top:1563.40px;font-size:5.67px;color:#fff;font-weight:700;letter-spacing:-0.069px;">Antarctica</div>
<div class="a" style="left:110px;top:1574.8px;width:2.5px;height:1px;background:#fbb917"></div>
<div class="t" style="left:117.67px;top:1572.82px;font-size:4.94px;color:#fff;font-weight:700;letter-spacing:-0.105px;">Europe</div>
<div class="a" style="left:110px;top:1583.0px;width:2.5px;height:1px;background:#fbb917"></div>
<div class="t" style="left:117.89px;top:1581.31px;font-size:4.36px;color:#fff;font-weight:700;letter-spacing:-0.072px;">Australia</div>
<div class="a" style="left:362px;top:856px;width:2px;height:22px;background:#bcbcbc;border-radius:1px"></div>
<div class="a" style="left:366px;top:856px;width:2px;height:22px;background:#bcbcbc;border-radius:1px"></div>
<div class="a" style="left:0px;top:1586.5px;width:2880px;height:64px;background:#fff"></div>
<div class="a" style="left:0px;top:1586px;width:2880px;height:2px;background:#e4e4e4"></div>
<div class="a" style="left:85px;top:1588px;width:1.5px;height:62px;background:#ededed"></div>
<div class="a" style="left:353px;top:1588px;width:1.5px;height:62px;background:#ededed"></div>
<div class="a" style="left:619px;top:1588px;width:1.5px;height:62px;background:#ededed"></div>
<div class="a" style="left:2133.4px;top:1588px;width:1.5px;height:62px;background:#ededed"></div>
<div class="a" style="left:2283.5px;top:1588px;width:1.5px;height:62px;background:#ededed"></div>
<div class="a" style="left:2355.3px;top:1588px;width:1.5px;height:62px;background:#ededed"></div>
<div class="a" style="left:2799px;top:1588px;width:1.5px;height:62px;background:#ededed"></div>
<svg style="left:24px;top:1601px;" width="37" height="34" viewBox="0 0 37 34"><path d="M16 2 C7.5 2 2 7.5 2 13.5 C2 17.5 4.2 20.5 7.5 22.5 L5 29.5 L13.5 24.5 C14.3 24.6 15.2 24.7 16 24.7 C24.5 24.7 30 19.2 30 13.4 C30 7.5 24.5 2 16 2 Z" fill="#fff" stroke="#333" stroke-width="2.2" stroke-linejoin="round"/><path d="M29.5 17.5 C33.5 19 35 21.5 35 24 C35 25.8 34.2 27.3 33 28.5 L34.5 32.5 L29 30 C26.5 30.5 23 30 20.5 28" fill="none" stroke="#333" stroke-width="2.2" stroke-linejoin="round"/><circle cx="10" cy="13.5" r="2.3" fill="#1f7aa0"/><circle cx="16" cy="13.5" r="2.3" fill="#1f7aa0"/><circle cx="22" cy="13.5" r="2.3" fill="#1f7aa0"/></svg>
<div class="a" style="left:128.2px;top:1600.7px;width:57.1px;height:36.3px;background:#f4f4f4;border:1.5px solid #dedede"></div>
<div class="t" style="left:149.34px;top:1604.71px;font-size:25.15px;color:#e0533c;">3</div>
<div class="t" style="left:197.00px;top:1604.71px;font-size:25.15px;color:#333;">/</div>
<div class="t" style="left:215.95px;top:1604.71px;font-size:25.15px;color:#333;transform:scaleX(0.9660);transform-origin:0 0;">14 Slides</div>
<svg style="left:371px;top:1606px;" width="35" height="24" viewBox="0 0 35 24"><rect x="1.2" y="1.2" width="32.5" height="21.5" fill="none" stroke="#777" stroke-width="2.2"/><rect x="6" y="6" width="5" height="4" fill="none" stroke="#777" stroke-width="1.8"/><rect x="6" y="13.5" width="5" height="4" fill="none" stroke="#777" stroke-width="1.8"/><rect x="15" y="6" width="14" height="11.5" fill="none" stroke="#777" stroke-width="1.8"/></svg>
<div class="t" style="left:419.24px;top:1604.71px;font-size:25.15px;color:#333;letter-spacing:0.148px;">Normal View</div>
<svg style="left:575px;top:1614px;" width="17" height="12" viewBox="0 0 17 12"><path d="M1.5 2.5 L8 9 L14.5 2.5" fill="none" stroke="#555" stroke-width="2"/></svg>
<svg style="left:2153px;top:1603px;" width="28" height="32" viewBox="0 0 28 32"><path d="M1.2 1.2 H17 L25.5 9.5 V30.5 H1.2 Z" fill="none" stroke="#555" stroke-width="2.2" stroke-linejoin="round"/><path d="M16.5 1.5 V10 H25" fill="#555" stroke="#555" stroke-width="1.5"/></svg>
<div class="t" style="left:2198.94px;top:1604.71px;font-size:25.15px;color:#333;letter-spacing:0.321px;">Notes</div>
<svg style="left:2301px;top:1601px;" width="34" height="34" viewBox="0 0 34 34"><path d="M8 1 V27 M1 8 H28" fill="none" stroke="#1f7aa0" stroke-width="2" stroke-dasharray="3 3"/><rect x="13" y="13" width="19" height="19" fill="none" stroke="#333" stroke-width="2.4"/></svg>
<div class="t" style="left:2382.96px;top:1605.08px;font-size:24.71px;color:#222;transform:scaleX(0.9684);transform-origin:0 0;">86%</div>
<div class="a" style="left:2452px;top:1615.7px;width:92px;height:6px;background:#e0533c;border-radius:3px"></div>
<div class="a" style="left:2543px;top:1617.7px;width:168.4px;height:2px;background:#cfcfcf"></div>
<svg style="left:2542px;top:1606px;" width="26" height="26" viewBox="0 0 26 26"><circle cx="12.8" cy="12.7" r="11.4" fill="#fff" stroke="#aaa" stroke-width="2"/></svg>
<svg style="left:2734px;top:1601px;" width="32" height="32" viewBox="0 0 32 32"><rect x="1.2" y="1.2" width="29.5" height="29.5" fill="none" stroke="#444" stroke-width="2" stroke-dasharray="4 3"/><path d="M7 7 L17 17 M7 7 H14 M7 7 V14" fill="none" stroke="#1f7aa0" stroke-width="2.4"/><rect x="16" y="16" width="7" height="7" fill="none" stroke="#1f7aa0" stroke-width="2.2"/></svg>
<svg style="left:2819px;top:1600px;" width="30" height="30" viewBox="0 0 30 30"><circle cx="14" cy="7" r="5.8" fill="none" stroke="#333" stroke-width="2.2"/><path d="M2 26.5 C2 18 7 13.8 14 13.8 C21 13.8 26 18 26 26.5 Z" fill="none" stroke="#333" stroke-width="2.2" stroke-linejoin="round"/></svg>
<svg style="left:2847px;top:1590px;" width="32" height="33" viewBox="0 0 32 33"><path d="M1 6 Q-2 9 1 13" fill="none" stroke="#1f7aa0" stroke-width="2.2"/><circle cx="16" cy="16.3" r="15.7" fill="#e8141b"/><path d="M12.5 10 L17.5 7 V25" fill="none" stroke="#fff" stroke-width="3.2"/></svg>
<div class="a" style="left:0px;top:0px;width:2880px;height:2px;background:#d6d6d6"></div>
<div class="a" style="left:0px;top:0px;width:2px;height:1652px;background:#d6d6d6"></div>
<div class="a" style="left:2878px;top:0px;width:2px;height:1652px;background:#d6d6d6"></div>
<div class="a" style="left:0px;top:1650px;width:2880px;height:2px;background:#d6d6d6"></div>
</body></html>
